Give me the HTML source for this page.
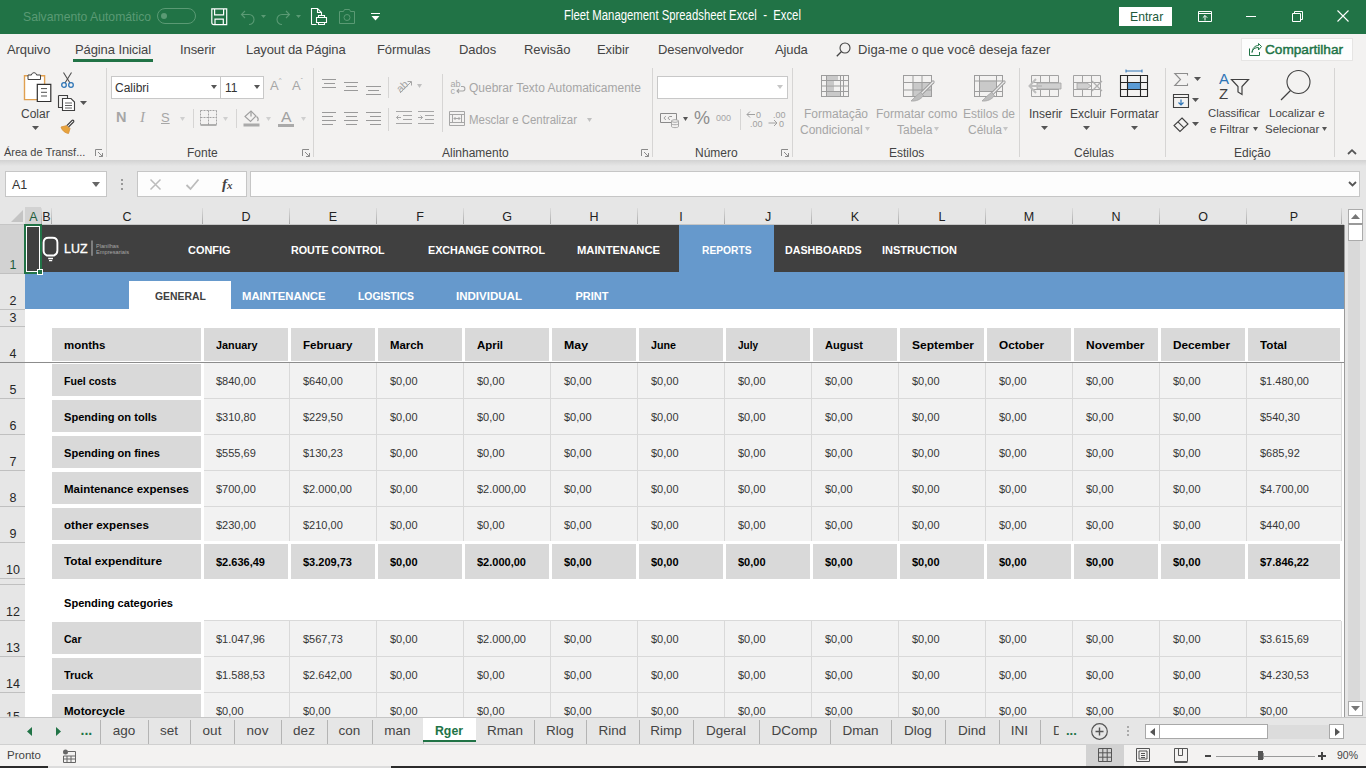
<!DOCTYPE html><html><head><meta charset="utf-8"><title>Excel</title><style>
html,body{margin:0;padding:0;} body{width:1366px;height:768px;overflow:hidden;position:relative;background:#f3f2f1;font-family:"Liberation Sans", sans-serif;} div{box-sizing:border-box;} svg{position:absolute;overflow:visible;}
</style></head><body>
<div style="position:absolute;left:0px;top:0px;width:1366px;height:34px;background:#217346;"></div>
<div style="position:absolute;left:23px;top:11px;font-size:12.2px;line-height:12.2px;color:#5a9a74;font-weight:normal;letter-spacing:0px;white-space:nowrap;">Salvamento Automático</div>
<div style="position:absolute;left:157px;top:8px;width:39px;height:16px;border:1px solid #5a9a74;border-radius:8px;"></div>
<div style="position:absolute;left:161px;top:13px;width:6px;height:6px;background:#5a9a74;border-radius:3px;"></div>
<svg style="left:211px;top:8px" width="17" height="18" viewBox="0 0 17 18"><path d="M0.8 0.8H15.7V16.7H3C1.6 16.7 0.8 15.9 0.8 14.5Z M3.6 0.8V6.8H12.6V0.8 M4 16.7V11.2H12.3V16.7" fill="none" stroke="#fff" stroke-width="1.2"/></svg>
<svg style="left:240px;top:9px" width="16" height="16" viewBox="0 0 16 16"><path d="M5 2L1.5 5.5L5 9 M1.5 5.5H9a5 5 0 0 1 0 10" fill="none" stroke="#5a9a74" stroke-width="1.1"/></svg>
<svg style="left:261px;top:15px" width="5" height="3"><path d="M0 0H5L2.5 3Z" fill="#5a9a74"/></svg>
<svg style="left:275px;top:9px" width="16" height="16" viewBox="0 0 16 16"><path d="M11 2L14.5 5.5L11 9 M14.5 5.5H7a5 5 0 0 0 0 10" fill="none" stroke="#5a9a74" stroke-width="1.1"/></svg>
<svg style="left:296px;top:15px" width="5" height="3"><path d="M0 0H5L2.5 3Z" fill="#5a9a74"/></svg>
<svg style="left:311px;top:8px" width="16" height="17" viewBox="0 0 16 17"><path d="M0.5 16.5V0.5H6.5L10.5 4.5V8 M6.5 0.5V4.5H10.5 M0.5 16.5H5.5 M5.5 9.5H15.5V14.5H5.5Z M7.5 9.5V7.5H13.5V9.5 M7.5 14.5V16.5H13.5V14.5" fill="none" stroke="#fff" stroke-width="1.1"/></svg>
<svg style="left:339px;top:9px" width="16" height="15" viewBox="0 0 16 15"><path d="M0.5 2.5H4.5L5.5 0.5H10.5L11.5 2.5H15.5V14.5H0.5Z" fill="none" stroke="#5a9a74" stroke-width="1"/><circle cx="8" cy="8.5" r="3" fill="none" stroke="#5a9a74" stroke-width="1"/></svg>
<svg style="left:371px;top:13px" width="9" height="8" viewBox="0 0 9 8"><path d="M0 0.5H9" stroke="#fff" stroke-width="1"/><path d="M0.5 3H8.5L4.5 7.5Z" fill="#fff"/></svg>
<div style="position:absolute;left:563.5px;top:9.32px;font-size:13.8px;line-height:13.8px;color:#fff;font-weight:normal;white-space:nowrap;transform:scaleX(0.8217);transform-origin:0 0;">Fleet Management Spreadsheet Excel&nbsp;&nbsp;-&nbsp;&nbsp;Excel</div>
<div style="position:absolute;left:1119px;top:7px;width:53px;height:19px;background:#fff;"></div>
<div style="position:absolute;left:1130px;top:11px;font-size:12.2px;line-height:12.2px;color:#215a3a;font-weight:normal;letter-spacing:0px;white-space:nowrap;">Entrar</div>
<svg style="left:1198px;top:11px" width="14" height="11" viewBox="0 0 14 11"><path d="M0.5 0.5H13.5V10.5H0.5Z M0.5 2.5H13.5 M7 9.5V4.5 M4.8 6.7L7 4.5L9.2 6.7" fill="none" stroke="#fff" stroke-width="1"/></svg>
<div style="position:absolute;left:1246px;top:16px;width:10px;height:1px;background:#fff;"></div>
<svg style="left:1292px;top:11px" width="11" height="11" viewBox="0 0 11 11"><path d="M0.5 2.5H8.5V10.5H0.5Z M2.5 2.5V0.5H10.5V8.5H8.5" fill="none" stroke="#fff" stroke-width="1"/></svg>
<svg style="left:1337px;top:10px" width="12" height="12" viewBox="0 0 12 12"><path d="M0.5 0.5L11.5 11.5M11.5 0.5L0.5 11.5" stroke="#fff" stroke-width="1.1"/></svg>
<div style="position:absolute;left:7px;top:43px;font-size:13px;line-height:13px;color:#444;font-weight:normal;letter-spacing:-0.1px;white-space:nowrap;">Arquivo</div>
<div style="position:absolute;left:75px;top:43px;font-size:13px;line-height:13px;color:#444;font-weight:normal;letter-spacing:-0.1px;white-space:nowrap;">Página Inicial</div>
<div style="position:absolute;left:180px;top:43px;font-size:13px;line-height:13px;color:#444;font-weight:normal;letter-spacing:-0.1px;white-space:nowrap;">Inserir</div>
<div style="position:absolute;left:246px;top:43px;font-size:13px;line-height:13px;color:#444;font-weight:normal;letter-spacing:-0.1px;white-space:nowrap;">Layout da Página</div>
<div style="position:absolute;left:377px;top:43px;font-size:13px;line-height:13px;color:#444;font-weight:normal;letter-spacing:-0.1px;white-space:nowrap;">Fórmulas</div>
<div style="position:absolute;left:459px;top:43px;font-size:13px;line-height:13px;color:#444;font-weight:normal;letter-spacing:-0.1px;white-space:nowrap;">Dados</div>
<div style="position:absolute;left:524px;top:43px;font-size:13px;line-height:13px;color:#444;font-weight:normal;letter-spacing:-0.1px;white-space:nowrap;">Revisão</div>
<div style="position:absolute;left:597px;top:43px;font-size:13px;line-height:13px;color:#444;font-weight:normal;letter-spacing:-0.1px;white-space:nowrap;">Exibir</div>
<div style="position:absolute;left:658px;top:43px;font-size:13px;line-height:13px;color:#444;font-weight:normal;letter-spacing:-0.1px;white-space:nowrap;">Desenvolvedor</div>
<div style="position:absolute;left:775px;top:43px;font-size:13px;line-height:13px;color:#444;font-weight:normal;letter-spacing:-0.1px;white-space:nowrap;">Ajuda</div>
<div style="position:absolute;left:73px;top:59px;width:80px;height:3px;background:#217346;"></div>
<svg style="left:836px;top:42px" width="15" height="15" viewBox="0 0 15 15"><circle cx="9" cy="6" r="5" fill="none" stroke="#444" stroke-width="1.1"/><path d="M5.5 9.5L0.8 14.2" stroke="#444" stroke-width="1.3"/></svg>
<div style="position:absolute;left:858px;top:43px;font-size:13px;line-height:13px;color:#444;font-weight:normal;letter-spacing:0.05px;white-space:nowrap;">Diga-me o que você deseja fazer</div>
<div style="position:absolute;left:1241px;top:38px;width:112px;height:23px;background:#fdfdfd;border:1px solid #e6e5e4;"></div>
<svg style="left:1249px;top:43px" width="13" height="13" viewBox="0 0 13 13"><path d="M0.5 5.5V12.5H10.5V9 M3 9.5C3.5 6 6 4.5 9.5 4.5V7L12.5 3.5L9.5 0.5V2.5C6 2.5 3.5 5 3 9.5Z" fill="none" stroke="#217346" stroke-width="1"/></svg>
<div style="position:absolute;left:1265px;top:42.57px;font-size:13.5px;line-height:13.5px;color:#217346;font-weight:normal;white-space:nowrap;transform:scaleX(1.0093);transform-origin:0 0;-webkit-text-stroke:0.45px #217346;">Compartilhar</div>
<div style="position:absolute;left:106px;top:68px;width:1px;height:89px;background:#d6d5d4;"></div>
<div style="position:absolute;left:313px;top:68px;width:1px;height:89px;background:#d6d5d4;"></div>
<div style="position:absolute;left:652px;top:68px;width:1px;height:89px;background:#d6d5d4;"></div>
<div style="position:absolute;left:792px;top:68px;width:1px;height:89px;background:#d6d5d4;"></div>
<div style="position:absolute;left:1019px;top:68px;width:1px;height:89px;background:#d6d5d4;"></div>
<div style="position:absolute;left:1165px;top:68px;width:1px;height:89px;background:#d6d5d4;"></div>
<div style="position:absolute;left:1334px;top:68px;width:1px;height:89px;background:#d6d5d4;"></div>
<svg style="left:23px;top:71px" width="30" height="32" viewBox="0 0 30 32"><path d="M1.5 4.8H21.6V28.6H1.5Z" fill="#fff" stroke="#e0a050" stroke-width="1.4"/><path d="M5 8.5V4H8.5C8.5 1 13.5 1 13.5 4H17.5V8.5Z" fill="#fff" stroke="#404040" stroke-width="1"/><path d="M14.3 13.3H27.8V30.5H14.3Z" fill="#fff" stroke="#303030" stroke-width="1.2"/><path d="M18 17.6H24 M18 21.3H24 M18 25H24" stroke="#505050" stroke-width="1"/></svg>
<div style="position:absolute;left:21px;top:108px;font-size:12px;line-height:12px;color:#444;font-weight:normal;letter-spacing:0px;white-space:nowrap;">Colar</div>
<svg style="left:31.5px;top:126px" width="7" height="4"><path d="M0 0H7L3.5 4Z" fill="#555"/></svg>
<svg style="left:61px;top:72px" width="13" height="16" viewBox="0 0 13 16"><path d="M2.5 0.5L9 11 M10.5 0.5L4 11" stroke="#505050" stroke-width="1.1"/><circle cx="3" cy="13" r="2.3" fill="none" stroke="#2e75b6" stroke-width="1.3"/><circle cx="10" cy="13" r="2.3" fill="none" stroke="#2e75b6" stroke-width="1.3"/></svg>
<svg style="left:58px;top:95px" width="17" height="16" viewBox="0 0 17 16"><path d="M0.5 0.5H9.5V3 M0.5 0.5V12.5H4" fill="none" stroke="#404040" stroke-width="1.1"/><path d="M4.5 3.5H13L16.5 7V15.5H4.5Z" fill="#fff" stroke="#404040" stroke-width="1.1"/><path d="M7 8H14 M7 10.5H14 M7 13H14" stroke="#505050" stroke-width="0.9"/></svg>
<svg style="left:79.5px;top:101px" width="7" height="4"><path d="M0 0H7L3.5 4Z" fill="#555"/></svg>
<svg style="left:60px;top:118px" width="16" height="16" viewBox="0 0 16 16"><path d="M1 9L7 7.5L10 10.5L8.5 15.5C5 15 2 12.5 1 9Z" fill="#e8a33c" stroke="#d6913a" stroke-width="0.8"/><path d="M7 7.5L12 2.5C13 1.5 14.5 3 13.5 4L8.5 9" fill="#fff" stroke="#404040" stroke-width="1.1"/></svg>
<div style="position:absolute;left:4px;top:147px;font-size:11px;line-height:11px;color:#444;font-weight:normal;letter-spacing:0px;white-space:nowrap;">Área de Transf...</div>
<svg style="left:95px;top:149px" width="8" height="8" viewBox="0 0 8 8"><path d="M0.5 7V0.5H7 M3 3L7.5 7.5 M7.5 4V7.5H4" fill="none" stroke="#8a8a8a" stroke-width="1"/></svg>
<div style="position:absolute;left:111px;top:76px;width:110px;height:23px;background:#fff;border:1px solid #c8c8c8;"></div>
<div style="position:absolute;left:115px;top:82px;font-size:12px;line-height:12px;color:#333;font-weight:normal;letter-spacing:0px;white-space:nowrap;">Calibri</div>
<svg style="left:211.0px;top:85px" width="6" height="4"><path d="M0 0H6L3.0 4Z" fill="#555"/></svg>
<div style="position:absolute;left:220px;top:76px;width:44px;height:23px;background:#fff;border:1px solid #c8c8c8;"></div>
<div style="position:absolute;left:225px;top:82px;font-size:12px;line-height:12px;color:#333;font-weight:normal;letter-spacing:0px;white-space:nowrap;">11</div>
<svg style="left:254.0px;top:85px" width="6" height="4"><path d="M0 0H6L3.0 4Z" fill="#555"/></svg>
<div style="position:absolute;left:270px;top:74px;font-size:13px;line-height:13px;color:#a6a6a6;font-weight:normal;letter-spacing:0px;white-space:nowrap;">A<sup style="font-size:6px;vertical-align:8px">^</sup></div>
<div style="position:absolute;left:292px;top:74px;font-size:13px;line-height:13px;color:#a6a6a6;font-weight:normal;letter-spacing:0px;white-space:nowrap;">A<sup style="font-size:6px;vertical-align:8px">ˇ</sup></div>
<div style="position:absolute;left:116px;top:110px;font-size:14.5px;line-height:14.5px;color:#a6a6a6;font-weight:bold;letter-spacing:0px;white-space:nowrap;">N</div>
<div style="position:absolute;left:140px;top:110px;font-size:15px;line-height:15px;color:#a6a6a6;font-weight:normal;letter-spacing:0px;white-space:nowrap;font-family:'Liberation Serif',serif;"><i>I</i></div>
<div style="position:absolute;left:161px;top:111px;font-size:13px;line-height:13px;color:#a6a6a6;font-weight:normal;letter-spacing:0px;white-space:nowrap;"><u>S</u></div>
<svg style="left:179.5px;top:117px" width="5" height="4"><path d="M0 0H5L2.5 4Z" fill="#cfcfcf"/></svg>
<div style="position:absolute;left:193px;top:109px;width:1px;height:19px;background:#d6d5d4;"></div>
<svg style="left:200px;top:110px" width="17" height="16" viewBox="0 0 17 16"><path d="M0.5 0.5H16.5 M0.5 0.5V15 M16.5 0.5V15 M8.5 0.5V15 M0.5 7.5H16.5" fill="none" stroke="#a3a3a3" stroke-width="1" stroke-dasharray="2 1"/><path d="M0.5 15H16.5" stroke="#8a8a8a" stroke-width="1.3"/></svg>
<svg style="left:222.5px;top:117px" width="5" height="4"><path d="M0 0H5L2.5 4Z" fill="#cfcfcf"/></svg>
<div style="position:absolute;left:236px;top:109px;width:1px;height:19px;background:#d6d5d4;"></div>
<svg style="left:243px;top:109px" width="18" height="18" viewBox="0 0 18 18"><path d="M2 7.5L8 2L13 7L7.5 12.5Z" fill="none" stroke="#a0a0a0" stroke-width="1.1"/><path d="M8 2V7.5" stroke="#a0a0a0" stroke-width="1.3"/><path d="M13.5 7.5C15.5 9 15.5 11 14.5 12" fill="none" stroke="#a0a0a0" stroke-width="1.3"/><rect x="0.5" y="14.5" width="16" height="3" fill="#aaaaaa"/></svg>
<svg style="left:265.5px;top:117px" width="5" height="4"><path d="M0 0H5L2.5 4Z" fill="#cfcfcf"/></svg>
<div style="position:absolute;left:280.5px;top:109.00px;font-size:15px;line-height:15px;color:#a0a0a0;font-weight:normal;white-space:nowrap;transform:scaleX(1.0494);transform-origin:0 0;">A</div>
<div style="position:absolute;left:278px;top:123.5px;width:16px;height:3px;background:#aaaaaa;"></div>
<svg style="left:300.5px;top:117px" width="5" height="4"><path d="M0 0H5L2.5 4Z" fill="#cfcfcf"/></svg>
<div style="position:absolute;left:187px;top:147px;font-size:12px;line-height:12px;color:#444;font-weight:normal;letter-spacing:0px;white-space:nowrap;">Fonte</div>
<svg style="left:302px;top:149px" width="8" height="8" viewBox="0 0 8 8"><path d="M0.5 7V0.5H7 M3 3L7.5 7.5 M7.5 4V7.5H4" fill="none" stroke="#8a8a8a" stroke-width="1"/></svg>
<div style="position:absolute;left:321.5px;top:79px;width:14.5px;height:1px;background:#9a9a9a;"></div>
<div style="position:absolute;left:324px;top:83px;width:10.5px;height:1px;background:#9a9a9a;"></div>
<div style="position:absolute;left:321.5px;top:87px;width:14.5px;height:1px;background:#9a9a9a;"></div>
<div style="position:absolute;left:344px;top:82px;width:14px;height:1px;background:#9a9a9a;"></div>
<div style="position:absolute;left:345.5px;top:86px;width:11.0px;height:1px;background:#9a9a9a;"></div>
<div style="position:absolute;left:344px;top:90px;width:14px;height:1px;background:#9a9a9a;"></div>
<div style="position:absolute;left:366px;top:86px;width:15px;height:1px;background:#9a9a9a;"></div>
<div style="position:absolute;left:368px;top:90px;width:10.5px;height:1px;background:#9a9a9a;"></div>
<div style="position:absolute;left:366px;top:94px;width:15px;height:1px;background:#9a9a9a;"></div>
<div style="position:absolute;left:388px;top:77px;width:1px;height:21px;background:#d6d5d4;"></div>
<svg style="left:394px;top:77px" width="20" height="18" viewBox="0 0 20 18"><text x="2" y="13" font-size="10.5" fill="#a6a6a6" transform="rotate(-45 8 9)" font-family="Liberation Sans">ab</text><path d="M6 16L17 5 M13.5 4.5H17.5V8.5" fill="none" stroke="#a6a6a6" stroke-width="1"/></svg>
<svg style="left:416.5px;top:84px" width="5" height="4"><path d="M0 0H5L2.5 4Z" fill="#c0c0c0"/></svg>
<div style="position:absolute;left:321.5px;top:112px;width:14.5px;height:1px;background:#9a9a9a;"></div>
<div style="position:absolute;left:321.5px;top:116px;width:11.0px;height:1px;background:#9a9a9a;"></div>
<div style="position:absolute;left:321.5px;top:120px;width:14.5px;height:1px;background:#9a9a9a;"></div>
<div style="position:absolute;left:321.5px;top:124px;width:11.0px;height:1px;background:#9a9a9a;"></div>
<div style="position:absolute;left:344px;top:112px;width:14px;height:1px;background:#9a9a9a;"></div>
<div style="position:absolute;left:345.5px;top:116px;width:11.0px;height:1px;background:#9a9a9a;"></div>
<div style="position:absolute;left:344px;top:120px;width:14px;height:1px;background:#9a9a9a;"></div>
<div style="position:absolute;left:345.5px;top:124px;width:11.0px;height:1px;background:#9a9a9a;"></div>
<div style="position:absolute;left:366px;top:112px;width:15px;height:1px;background:#9a9a9a;"></div>
<div style="position:absolute;left:370px;top:116px;width:11px;height:1px;background:#9a9a9a;"></div>
<div style="position:absolute;left:366px;top:120px;width:15px;height:1px;background:#9a9a9a;"></div>
<div style="position:absolute;left:370px;top:124px;width:11px;height:1px;background:#9a9a9a;"></div>
<div style="position:absolute;left:388px;top:108px;width:1px;height:23px;background:#d6d5d4;"></div>
<svg style="left:396px;top:111px" width="16" height="14" viewBox="0 0 16 14"><path d="M0 0.5H16 M7 4.5H16 M7 8.5H16 M0 12.5H16 M5 6.5H0.5 M2.5 4.5L0.5 6.5L2.5 8.5" fill="none" stroke="#a6a6a6" stroke-width="1"/></svg>
<svg style="left:418px;top:111px" width="16" height="14" viewBox="0 0 16 14"><path d="M0 0.5H16 M7 4.5H16 M7 8.5H16 M0 12.5H16 M0 6.5H4.5 M2.5 4.5L4.5 6.5L2.5 8.5" fill="none" stroke="#a6a6a6" stroke-width="1"/></svg>
<div style="position:absolute;left:442px;top:74px;width:1px;height:58px;background:#d6d5d4;"></div>
<svg style="left:450px;top:79px" width="16" height="16" viewBox="0 0 16 16"><text x="0.5" y="7.5" font-size="9" fill="#a6a6a6" font-family="Liberation Sans">ab</text><text x="0.5" y="14.5" font-size="9" fill="#a6a6a6" font-family="Liberation Sans">c</text><path d="M7 12H13C15.5 12 15.5 7.5 13 7.5H11 M9 10L7 12L9 14" fill="none" stroke="#a6a6a6" stroke-width="1.1"/></svg>
<div style="position:absolute;left:469px;top:82px;font-size:12px;line-height:12px;color:#a6a6a6;font-weight:normal;letter-spacing:0px;white-space:nowrap;">Quebrar Texto Automaticamente</div>
<svg style="left:449px;top:111px" width="16" height="16" viewBox="0 0 16 16"><path d="M0.5 0.5H15.5V14.5H0.5Z M0.5 3.5H15.5 M0.5 11.5H15.5 M3.5 3.5V11.5 M12.5 3.5V11.5 M5 7.5H11 M6.5 6L5 7.5L6.5 9 M9.5 6L11 7.5L9.5 9" fill="none" stroke="#a6a6a6" stroke-width="1"/></svg>
<div style="position:absolute;left:469px;top:113.84px;font-size:12px;line-height:12px;color:#a6a6a6;font-weight:normal;white-space:nowrap;transform:scaleX(0.9526);transform-origin:0 0;">Mesclar e Centralizar</div>
<svg style="left:586.5px;top:118px" width="5" height="4"><path d="M0 0H5L2.5 4Z" fill="#c0c0c0"/></svg>
<div style="position:absolute;left:442px;top:147px;font-size:12px;line-height:12px;color:#444;font-weight:normal;letter-spacing:0px;white-space:nowrap;">Alinhamento</div>
<svg style="left:641px;top:149px" width="8" height="8" viewBox="0 0 8 8"><path d="M0.5 7V0.5H7 M3 3L7.5 7.5 M7.5 4V7.5H4" fill="none" stroke="#8a8a8a" stroke-width="1"/></svg>
<div style="position:absolute;left:657px;top:76px;width:131px;height:23px;background:#fff;border:1px solid #c8c8c8;"></div>
<svg style="left:777.0px;top:85px" width="6" height="4"><path d="M0 0H6L3.0 4Z" fill="#c6c6c6"/></svg>
<svg style="left:660px;top:112px" width="19" height="16" viewBox="0 0 19 16"><path d="M0.5 1.5H16.5V10.5H0.5Z" fill="none" stroke="#8a8a8a" stroke-width="1"/><path d="M6 4.5C4 4.5 3.5 7.5 6 7.5 M10 4.5C8 4.5 7.5 7.5 10 7.5 M10 4.5H12" fill="none" stroke="#8a8a8a" stroke-width="0.9"/><path d="M11.5 9V14.5C11.5 16 18.5 16 18.5 14.5V9Z" fill="#f3f2f1" stroke="#a0a0a0" stroke-width="0.9"/><ellipse cx="15" cy="9" rx="3.5" ry="1.3" fill="#f3f2f1" stroke="#a0a0a0" stroke-width="0.9"/><path d="M11.5 11.8C11.5 13 18.5 13 18.5 11.8" fill="none" stroke="#a0a0a0" stroke-width="0.9"/></svg>
<svg style="left:682.5px;top:117px" width="5" height="4"><path d="M0 0H5L2.5 4Z" fill="#555"/></svg>
<div style="position:absolute;left:694px;top:109px;font-size:18px;line-height:18px;color:#8c8c8c;font-weight:normal;letter-spacing:0px;white-space:nowrap;font-weight:300;">%</div>
<div style="position:absolute;left:716px;top:114px;font-size:9px;line-height:9px;color:#a6a6a6;font-weight:normal;letter-spacing:0px;white-space:nowrap;">000</div>
<div style="position:absolute;left:740px;top:109px;width:1px;height:21px;background:#d6d5d4;"></div>
<svg style="left:746px;top:110px" width="18" height="18" viewBox="0 0 18 18"><text x="10" y="8" font-size="9" fill="#a0a0a0" font-family="Liberation Sans">0</text><text x="4" y="16.5" font-size="9" fill="#a0a0a0" font-family="Liberation Sans">.00</text><path d="M1 4.5H9 M4 1.5L1 4.5L4 7.5" fill="none" stroke="#a0a0a0" stroke-width="1"/></svg>
<svg style="left:768px;top:110px" width="18" height="18" viewBox="0 0 18 18"><text x="5" y="8" font-size="9" fill="#a0a0a0" font-family="Liberation Sans">.00</text><text x="11" y="16.5" font-size="9" fill="#a0a0a0" font-family="Liberation Sans">0</text><path d="M0.5 13H9 M6 10L9 13L6 16" fill="none" stroke="#a0a0a0" stroke-width="1"/></svg>
<div style="position:absolute;left:695px;top:147px;font-size:12px;line-height:12px;color:#444;font-weight:normal;letter-spacing:0px;white-space:nowrap;">Número</div>
<svg style="left:781px;top:149px" width="8" height="8" viewBox="0 0 8 8"><path d="M0.5 7V0.5H7 M3 3L7.5 7.5 M7.5 4V7.5H4" fill="none" stroke="#8a8a8a" stroke-width="1"/></svg>
<svg style="left:821px;top:75px" width="36" height="30"><rect x="5" y="0" width="12" height="5" fill="#c9c9c9"/><rect x="5" y="5" width="8" height="5.5" fill="#c9c9c9"/><rect x="5" y="10.5" width="8" height="5.5" fill="#c9c9c9"/><rect x="5" y="16" width="14" height="5" fill="#c9c9c9"/><rect x="0" y="0" width="1" height="22" fill="#9d9d9d"/><rect x="5" y="0" width="1" height="22" fill="#9d9d9d"/><rect x="19" y="0" width="1" height="22" fill="#9d9d9d"/><rect x="22" y="0" width="1" height="22" fill="#9d9d9d"/><rect x="27" y="0" width="1" height="22" fill="#9d9d9d"/><rect x="0" y="0" width="28" height="1" fill="#9d9d9d"/><rect x="0" y="5" width="28" height="1" fill="#9d9d9d"/><rect x="0" y="10.5" width="28" height="1" fill="#9d9d9d"/><rect x="0" y="16" width="28" height="1" fill="#9d9d9d"/><rect x="0" y="21" width="28" height="1" fill="#9d9d9d"/></svg>
<div style="position:absolute;left:804px;top:108px;font-size:12px;line-height:12px;color:#a6a6a6;font-weight:normal;letter-spacing:0px;white-space:nowrap;">Formatação</div>
<div style="position:absolute;left:800px;top:124px;font-size:12px;line-height:12px;color:#a6a6a6;font-weight:normal;letter-spacing:0px;white-space:nowrap;">Condicional</div>
<svg style="left:864.5px;top:127px" width="5" height="4"><path d="M0 0H5L2.5 4Z" fill="#c6c6c6"/></svg>
<svg style="left:903px;top:75px" width="36" height="30"><rect x="9.5" y="7" width="19" height="14" fill="#c9c9c9"/><rect x="0" y="0" width="1" height="22" fill="#9d9d9d"/><rect x="9.5" y="0" width="1" height="22" fill="#9d9d9d"/><rect x="18.5" y="0" width="1" height="22" fill="#9d9d9d"/><rect x="28" y="0" width="1" height="22" fill="#9d9d9d"/><rect x="0" y="0" width="28" height="1" fill="#9d9d9d"/><rect x="0" y="7" width="28" height="1" fill="#9d9d9d"/><rect x="0" y="14.5" width="28" height="1" fill="#9d9d9d"/><rect x="0" y="21" width="28" height="1" fill="#9d9d9d"/><path d="M30 7L18 19" stroke="#9d9d9d" stroke-width="3.2" stroke-linecap="round"/><path d="M30 7L18 19" stroke="#ececec" stroke-width="1.3" stroke-linecap="round"/><path d="M17.5 17.5C14 20 12 22 8 26C13 26.5 18 24.5 20.5 20.5Z" fill="#bdbdbd" stroke="#a5a5a5" stroke-width="0.8"/></svg>
<div style="position:absolute;left:876px;top:108px;font-size:12px;line-height:12px;color:#a6a6a6;font-weight:normal;letter-spacing:0px;white-space:nowrap;">Formatar como</div>
<div style="position:absolute;left:897px;top:124px;font-size:12px;line-height:12px;color:#a6a6a6;font-weight:normal;letter-spacing:0px;white-space:nowrap;">Tabela</div>
<svg style="left:933.5px;top:127px" width="5" height="4"><path d="M0 0H5L2.5 4Z" fill="#c6c6c6"/></svg>
<svg style="left:974px;top:75px" width="36" height="30"><rect x="5" y="5.5" width="17" height="10.5" fill="#c9c9c9"/><rect x="0" y="0" width="1" height="22" fill="#9d9d9d"/><rect x="5" y="0" width="1" height="22" fill="#9d9d9d"/><rect x="22" y="0" width="1" height="22" fill="#9d9d9d"/><rect x="28" y="0" width="1" height="22" fill="#9d9d9d"/><rect x="0" y="0" width="28" height="1" fill="#9d9d9d"/><rect x="0" y="5.5" width="28" height="1" fill="#9d9d9d"/><rect x="0" y="16" width="28" height="1" fill="#9d9d9d"/><rect x="0" y="21" width="28" height="1" fill="#9d9d9d"/><path d="M30 7L18 19" stroke="#9d9d9d" stroke-width="3.2" stroke-linecap="round"/><path d="M30 7L18 19" stroke="#ececec" stroke-width="1.3" stroke-linecap="round"/><path d="M17.5 17.5C14 20 12 22 8 26C13 26.5 18 24.5 20.5 20.5Z" fill="#bdbdbd" stroke="#a5a5a5" stroke-width="0.8"/></svg>
<div style="position:absolute;left:963px;top:108px;font-size:12px;line-height:12px;color:#a6a6a6;font-weight:normal;letter-spacing:0px;white-space:nowrap;">Estilos de</div>
<div style="position:absolute;left:968px;top:124px;font-size:12px;line-height:12px;color:#a6a6a6;font-weight:normal;letter-spacing:0px;white-space:nowrap;">Célula</div>
<svg style="left:1002.5px;top:127px" width="5" height="4"><path d="M0 0H5L2.5 4Z" fill="#c6c6c6"/></svg>
<div style="position:absolute;left:889px;top:147px;font-size:12px;line-height:12px;color:#444;font-weight:normal;letter-spacing:0px;white-space:nowrap;">Estilos</div>
<svg style="left:1028px;top:74px" width="34" height="24" viewBox="0 0 34 24"><path d="M3.5 1.5H30.5V22.5H3.5Z M12.5 1.5V22.5 M21.5 1.5V22.5 M3.5 8.5H30.5 M3.5 15.5H30.5" fill="none" stroke="#a3a3a3" stroke-width="1"/><path d="M9 9H33V15H9Z" fill="#cfcfcf" stroke="#a3a3a3" stroke-width="0.8"/><path d="M8 5L1.5 12L8 19 M1.5 12H14" fill="none" stroke="#bdbdbd" stroke-width="2"/></svg>
<div style="position:absolute;left:1029px;top:108px;font-size:12px;line-height:12px;color:#444;font-weight:normal;letter-spacing:0px;white-space:nowrap;">Inserir</div>
<svg style="left:1040.5px;top:126px" width="7" height="4"><path d="M0 0H7L3.5 4Z" fill="#555"/></svg>
<svg style="left:1072px;top:74px" width="32" height="24" viewBox="0 0 32 24"><path d="M1.5 1.5H28.5V22.5H1.5Z M10.5 1.5V22.5 M19.5 1.5V22.5 M1.5 8.5H28.5 M1.5 15.5H28.5" fill="none" stroke="#a3a3a3" stroke-width="1"/><path d="M5 9H15L19 12L15 15H5Z" fill="#cfcfcf" stroke="#a3a3a3" stroke-width="0.8"/><path d="M20 7L30 17 M30 7L20 17" stroke="#b0b0b0" stroke-width="1.3"/></svg>
<div style="position:absolute;left:1070px;top:108px;font-size:12px;line-height:12px;color:#444;font-weight:normal;letter-spacing:0px;white-space:nowrap;">Excluir</div>
<svg style="left:1082.5px;top:126px" width="7" height="4"><path d="M0 0H7L3.5 4Z" fill="#555"/></svg>
<svg style="left:1119px;top:69px" width="30" height="29" viewBox="0 0 30 29"><path d="M7 2H23 M7 0.5V3.5 M23 0.5V3.5" stroke="#2e75b6" stroke-width="1"/><rect x="8.5" y="13.5" width="13" height="7" fill="#5b9bd5"/><path d="M1.5 6.5H28.5V27.5H1.5Z M1.5 13.5H28.5 M1.5 20.5H28.5 M8.5 6.5V27.5 M21.5 6.5V27.5" fill="none" stroke="#262626" stroke-width="1.1"/></svg>
<div style="position:absolute;left:1110px;top:108px;font-size:12px;line-height:12px;color:#444;font-weight:normal;letter-spacing:0px;white-space:nowrap;">Formatar</div>
<svg style="left:1130.5px;top:126px" width="7" height="4"><path d="M0 0H7L3.5 4Z" fill="#555"/></svg>
<div style="position:absolute;left:1074px;top:147px;font-size:12px;line-height:12px;color:#444;font-weight:normal;letter-spacing:0px;white-space:nowrap;">Células</div>
<svg style="left:1174px;top:73px" width="14" height="13" viewBox="0 0 14 13"><path d="M13.5 2.5V0.5H0.8L6.5 6.5L0.8 12.5H13.5V10.5" fill="none" stroke="#8c8c8c" stroke-width="1.1"/></svg>
<svg style="left:1193.5px;top:77px" width="7" height="4"><path d="M0 0H7L3.5 4Z" fill="#555"/></svg>
<svg style="left:1173px;top:94px" width="16" height="14" viewBox="0 0 16 14"><path d="M0.5 0.5H15.5V13.5H0.5Z M0.5 3.5H15.5" fill="none" stroke="#404040" stroke-width="1.1"/><path d="M8 5.5V11 M5.5 8.5L8 11L10.5 8.5" fill="none" stroke="#2e75b6" stroke-width="1.2"/></svg>
<svg style="left:1191.5px;top:98px" width="7" height="4"><path d="M0 0H7L3.5 4Z" fill="#555"/></svg>
<svg style="left:1173px;top:117px" width="16" height="15" viewBox="0 0 16 15"><path d="M9 1L15 7L7 14.5L1 8.5Z M5 4.8L11 10.8" fill="none" stroke="#404040" stroke-width="1.1"/></svg>
<svg style="left:1191.5px;top:122px" width="7" height="4"><path d="M0 0H7L3.5 4Z" fill="#555"/></svg>
<div style="position:absolute;left:1219px;top:71px;font-size:15px;line-height:15px;color:#2e75b6;font-weight:normal;letter-spacing:0px;white-space:nowrap;">A</div>
<div style="position:absolute;left:1219px;top:86px;font-size:15px;line-height:15px;color:#404040;font-weight:normal;letter-spacing:0px;white-space:nowrap;">Z</div>
<svg style="left:1231px;top:79px" width="18" height="16" viewBox="0 0 18 16"><path d="M0.5 0.5H17.5L11 7.5V15.5L7 13V7.5Z" fill="none" stroke="#404040" stroke-width="1.2"/></svg>
<div style="position:absolute;left:1208px;top:108px;font-size:11.3px;line-height:11.3px;color:#444;font-weight:normal;letter-spacing:0px;white-space:nowrap;">Classificar</div>
<div style="position:absolute;left:1210px;top:124px;font-size:11.5px;line-height:11.5px;color:#444;font-weight:normal;letter-spacing:0px;white-space:nowrap;">e Filtrar</div>
<svg style="left:1252.5px;top:127px" width="5" height="4"><path d="M0 0H5L2.5 4Z" fill="#555"/></svg>
<svg style="left:1280px;top:70px" width="32" height="32" viewBox="0 0 32 32"><circle cx="18.5" cy="12" r="11.5" fill="none" stroke="#404040" stroke-width="1.1"/><path d="M10.5 20.5L1 30" stroke="#404040" stroke-width="1.3"/></svg>
<div style="position:absolute;left:1269px;top:108px;font-size:11.5px;line-height:11.5px;color:#444;font-weight:normal;letter-spacing:0px;white-space:nowrap;">Localizar e</div>
<div style="position:absolute;left:1265px;top:124px;font-size:11.5px;line-height:11.5px;color:#444;font-weight:normal;letter-spacing:0px;white-space:nowrap;">Selecionar</div>
<svg style="left:1321.5px;top:127px" width="5" height="4"><path d="M0 0H5L2.5 4Z" fill="#555"/></svg>
<div style="position:absolute;left:1234px;top:147px;font-size:12px;line-height:12px;color:#444;font-weight:normal;letter-spacing:0px;white-space:nowrap;">Edição</div>
<svg style="left:1347px;top:149px" width="10" height="6" viewBox="0 0 10 6"><path d="M1 5L5 1.2L9 5" fill="none" stroke="#555" stroke-width="1.8"/></svg>
<div style="position:absolute;left:0px;top:160px;width:1366px;height:6px;background:linear-gradient(#d2d2d2,#e6e6e6);"></div>
<div style="position:absolute;left:0px;top:166px;width:1366px;height:41px;background:#e6e6e6;"></div>
<div style="position:absolute;left:5px;top:171px;width:102px;height:26px;background:#fff;border:1px solid #c6c6c6;"></div>
<div style="position:absolute;left:12px;top:179px;font-size:12.5px;line-height:12.5px;color:#333;font-weight:normal;letter-spacing:0px;white-space:nowrap;">A1</div>
<svg style="left:92px;top:182px" width="8" height="5"><path d="M0 0H8L4 5Z" fill="#666"/></svg>
<div style="position:absolute;left:121px;top:179px;width:2px;height:2px;background:#999;"></div>
<div style="position:absolute;left:121px;top:183px;width:2px;height:2px;background:#999;"></div>
<div style="position:absolute;left:121px;top:187.5px;width:2px;height:2px;background:#999;"></div>
<div style="position:absolute;left:137px;top:171px;width:110px;height:26px;background:#fdfdfd;border:1px solid #c6c6c6;"></div>
<svg style="left:150px;top:179px" width="11" height="11" viewBox="0 0 11 11"><path d="M0.5 0.5L10.5 10.5M10.5 0.5L0.5 10.5" stroke="#bcbcbc" stroke-width="1.5"/></svg>
<svg style="left:186px;top:179px" width="13" height="11" viewBox="0 0 13 11"><path d="M0.5 6L4.5 10L12.5 0.5" fill="none" stroke="#bcbcbc" stroke-width="1.8"/></svg>
<div style="position:absolute;left:222px;top:177px;font-size:15px;line-height:15px;color:#444;font-weight:bold;letter-spacing:0px;white-space:nowrap;font-family:'Liberation Serif',serif;"><i>f<span style="font-size:11px">x</span></i></div>
<div style="position:absolute;left:250px;top:171px;width:1110px;height:26px;background:#fdfdfd;border:1px solid #c6c6c6;"></div>
<svg style="left:1348px;top:181px" width="9" height="6" viewBox="0 0 9 6"><path d="M1 1L4.5 4.5L8 1" fill="none" stroke="#555" stroke-width="1.8"/></svg>
<div style="position:absolute;left:0px;top:207px;width:1345px;height:18px;background:#e6e6e6;"></div>
<div style="position:absolute;left:0px;top:224px;width:1345px;height:1px;background:#c6c6c6;"></div>
<svg style="left:11px;top:210px" width="12" height="12"><path d="M12 0V12H0Z" fill="#c4c4c4"/></svg>
<div style="position:absolute;left:25px;top:207px;width:16px;height:17px;background:#d2d2d2;"></div>
<div style="position:absolute;left:-266.5px;width:600px;text-align:center;top:211px;font-size:12.5px;line-height:12.5px;color:#1f5c3c;font-weight:normal;letter-spacing:0px;white-space:nowrap;">A</div>
<div style="position:absolute;left:41px;top:208px;width:1px;height:16px;background:linear-gradient(#dcdcdc,#a9a9a9);"></div>
<div style="position:absolute;left:-253.5px;width:600px;text-align:center;top:211px;font-size:12.5px;line-height:12.5px;color:#222;font-weight:normal;letter-spacing:0px;white-space:nowrap;">B</div>
<div style="position:absolute;left:51px;top:208px;width:1px;height:16px;background:linear-gradient(#dcdcdc,#a9a9a9);"></div>
<div style="position:absolute;left:-173.0px;width:600px;text-align:center;top:211px;font-size:12.5px;line-height:12.5px;color:#222;font-weight:normal;letter-spacing:0px;white-space:nowrap;">C</div>
<div style="position:absolute;left:202px;top:208px;width:1px;height:16px;background:linear-gradient(#dcdcdc,#a9a9a9);"></div>
<div style="position:absolute;left:-54.0px;width:600px;text-align:center;top:211px;font-size:12.5px;line-height:12.5px;color:#222;font-weight:normal;letter-spacing:0px;white-space:nowrap;">D</div>
<div style="position:absolute;left:289px;top:208px;width:1px;height:16px;background:linear-gradient(#dcdcdc,#a9a9a9);"></div>
<div style="position:absolute;left:33.0px;width:600px;text-align:center;top:211px;font-size:12.5px;line-height:12.5px;color:#222;font-weight:normal;letter-spacing:0px;white-space:nowrap;">E</div>
<div style="position:absolute;left:376px;top:208px;width:1px;height:16px;background:linear-gradient(#dcdcdc,#a9a9a9);"></div>
<div style="position:absolute;left:120.0px;width:600px;text-align:center;top:211px;font-size:12.5px;line-height:12.5px;color:#222;font-weight:normal;letter-spacing:0px;white-space:nowrap;">F</div>
<div style="position:absolute;left:463px;top:208px;width:1px;height:16px;background:linear-gradient(#dcdcdc,#a9a9a9);"></div>
<div style="position:absolute;left:207.0px;width:600px;text-align:center;top:211px;font-size:12.5px;line-height:12.5px;color:#222;font-weight:normal;letter-spacing:0px;white-space:nowrap;">G</div>
<div style="position:absolute;left:550px;top:208px;width:1px;height:16px;background:linear-gradient(#dcdcdc,#a9a9a9);"></div>
<div style="position:absolute;left:294.0px;width:600px;text-align:center;top:211px;font-size:12.5px;line-height:12.5px;color:#222;font-weight:normal;letter-spacing:0px;white-space:nowrap;">H</div>
<div style="position:absolute;left:637px;top:208px;width:1px;height:16px;background:linear-gradient(#dcdcdc,#a9a9a9);"></div>
<div style="position:absolute;left:381.0px;width:600px;text-align:center;top:211px;font-size:12.5px;line-height:12.5px;color:#222;font-weight:normal;letter-spacing:0px;white-space:nowrap;">I</div>
<div style="position:absolute;left:724px;top:208px;width:1px;height:16px;background:linear-gradient(#dcdcdc,#a9a9a9);"></div>
<div style="position:absolute;left:468.0px;width:600px;text-align:center;top:211px;font-size:12.5px;line-height:12.5px;color:#222;font-weight:normal;letter-spacing:0px;white-space:nowrap;">J</div>
<div style="position:absolute;left:811px;top:208px;width:1px;height:16px;background:linear-gradient(#dcdcdc,#a9a9a9);"></div>
<div style="position:absolute;left:555.0px;width:600px;text-align:center;top:211px;font-size:12.5px;line-height:12.5px;color:#222;font-weight:normal;letter-spacing:0px;white-space:nowrap;">K</div>
<div style="position:absolute;left:898px;top:208px;width:1px;height:16px;background:linear-gradient(#dcdcdc,#a9a9a9);"></div>
<div style="position:absolute;left:642.0px;width:600px;text-align:center;top:211px;font-size:12.5px;line-height:12.5px;color:#222;font-weight:normal;letter-spacing:0px;white-space:nowrap;">L</div>
<div style="position:absolute;left:985px;top:208px;width:1px;height:16px;background:linear-gradient(#dcdcdc,#a9a9a9);"></div>
<div style="position:absolute;left:729.0px;width:600px;text-align:center;top:211px;font-size:12.5px;line-height:12.5px;color:#222;font-weight:normal;letter-spacing:0px;white-space:nowrap;">M</div>
<div style="position:absolute;left:1072px;top:208px;width:1px;height:16px;background:linear-gradient(#dcdcdc,#a9a9a9);"></div>
<div style="position:absolute;left:816.0px;width:600px;text-align:center;top:211px;font-size:12.5px;line-height:12.5px;color:#222;font-weight:normal;letter-spacing:0px;white-space:nowrap;">N</div>
<div style="position:absolute;left:1159px;top:208px;width:1px;height:16px;background:linear-gradient(#dcdcdc,#a9a9a9);"></div>
<div style="position:absolute;left:903.0px;width:600px;text-align:center;top:211px;font-size:12.5px;line-height:12.5px;color:#222;font-weight:normal;letter-spacing:0px;white-space:nowrap;">O</div>
<div style="position:absolute;left:1246px;top:208px;width:1px;height:16px;background:linear-gradient(#dcdcdc,#a9a9a9);"></div>
<div style="position:absolute;left:994.0px;width:600px;text-align:center;top:211px;font-size:12.5px;line-height:12.5px;color:#222;font-weight:normal;letter-spacing:0px;white-space:nowrap;">P</div>
<div style="position:absolute;left:1341px;top:208px;width:1px;height:16px;background:linear-gradient(#dcdcdc,#a9a9a9);"></div>
<div style="position:absolute;left:0px;top:225px;width:26px;height:492px;background:#e6e6e6;"></div>
<div style="position:absolute;left:25px;top:225px;width:1px;height:492px;background:#ababab;"></div>
<div style="position:absolute;left:0px;top:225px;width:25px;height:48px;background:#d2d2d2;"></div>
<div style="position:absolute;left:0px;top:273px;width:25px;height:1px;background:#c0c0c0;"></div>
<div style="position:absolute;left:0.5px;top:259px;font-size:12.5px;line-height:12.5px;color:#1f5c3c;font-weight:normal;letter-spacing:0px;white-space:nowrap;"><span style="display:inline-block;width:25px;text-align:center">1</span></div>
<div style="position:absolute;left:0px;top:309px;width:25px;height:1px;background:#c0c0c0;"></div>
<div style="position:absolute;left:0.5px;top:295px;font-size:12.5px;line-height:12.5px;color:#262626;font-weight:normal;letter-spacing:0px;white-space:nowrap;"><span style="display:inline-block;width:25px;text-align:center">2</span></div>
<div style="position:absolute;left:0px;top:326px;width:25px;height:1px;background:#c0c0c0;"></div>
<div style="position:absolute;left:0.5px;top:312px;font-size:12.5px;line-height:12.5px;color:#262626;font-weight:normal;letter-spacing:0px;white-space:nowrap;"><span style="display:inline-block;width:25px;text-align:center">3</span></div>
<div style="position:absolute;left:0px;top:362px;width:25px;height:1px;background:#c0c0c0;"></div>
<div style="position:absolute;left:0.5px;top:348px;font-size:12.5px;line-height:12.5px;color:#262626;font-weight:normal;letter-spacing:0px;white-space:nowrap;"><span style="display:inline-block;width:25px;text-align:center">4</span></div>
<div style="position:absolute;left:0px;top:398px;width:25px;height:1px;background:#c0c0c0;"></div>
<div style="position:absolute;left:0.5px;top:384px;font-size:12.5px;line-height:12.5px;color:#262626;font-weight:normal;letter-spacing:0px;white-space:nowrap;"><span style="display:inline-block;width:25px;text-align:center">5</span></div>
<div style="position:absolute;left:0px;top:434px;width:25px;height:1px;background:#c0c0c0;"></div>
<div style="position:absolute;left:0.5px;top:420px;font-size:12.5px;line-height:12.5px;color:#262626;font-weight:normal;letter-spacing:0px;white-space:nowrap;"><span style="display:inline-block;width:25px;text-align:center">6</span></div>
<div style="position:absolute;left:0px;top:470px;width:25px;height:1px;background:#c0c0c0;"></div>
<div style="position:absolute;left:0.5px;top:456px;font-size:12.5px;line-height:12.5px;color:#262626;font-weight:normal;letter-spacing:0px;white-space:nowrap;"><span style="display:inline-block;width:25px;text-align:center">7</span></div>
<div style="position:absolute;left:0px;top:506px;width:25px;height:1px;background:#c0c0c0;"></div>
<div style="position:absolute;left:0.5px;top:492px;font-size:12.5px;line-height:12.5px;color:#262626;font-weight:normal;letter-spacing:0px;white-space:nowrap;"><span style="display:inline-block;width:25px;text-align:center">8</span></div>
<div style="position:absolute;left:0px;top:542px;width:25px;height:1px;background:#c0c0c0;"></div>
<div style="position:absolute;left:0.5px;top:528px;font-size:12.5px;line-height:12.5px;color:#262626;font-weight:normal;letter-spacing:0px;white-space:nowrap;"><span style="display:inline-block;width:25px;text-align:center">9</span></div>
<div style="position:absolute;left:0px;top:578px;width:25px;height:1px;background:#c0c0c0;"></div>
<div style="position:absolute;left:0.5px;top:564px;font-size:12.5px;line-height:12.5px;color:#262626;font-weight:normal;letter-spacing:0px;white-space:nowrap;"><span style="display:inline-block;width:25px;text-align:center">10</span></div>
<div style="position:absolute;left:0px;top:584px;width:25px;height:1px;background:#c0c0c0;"></div>
<div style="position:absolute;left:0px;top:620px;width:25px;height:1px;background:#c0c0c0;"></div>
<div style="position:absolute;left:0.5px;top:606px;font-size:12.5px;line-height:12.5px;color:#262626;font-weight:normal;letter-spacing:0px;white-space:nowrap;"><span style="display:inline-block;width:25px;text-align:center">12</span></div>
<div style="position:absolute;left:0px;top:656px;width:25px;height:1px;background:#c0c0c0;"></div>
<div style="position:absolute;left:0.5px;top:642px;font-size:12.5px;line-height:12.5px;color:#262626;font-weight:normal;letter-spacing:0px;white-space:nowrap;"><span style="display:inline-block;width:25px;text-align:center">13</span></div>
<div style="position:absolute;left:0px;top:692px;width:25px;height:1px;background:#c0c0c0;"></div>
<div style="position:absolute;left:0.5px;top:678px;font-size:12.5px;line-height:12.5px;color:#262626;font-weight:normal;letter-spacing:0px;white-space:nowrap;"><span style="display:inline-block;width:25px;text-align:center">14</span></div>
<div style="position:absolute;left:0.5px;top:711px;font-size:12.5px;line-height:12.5px;color:#262626;font-weight:normal;letter-spacing:0px;white-space:nowrap;clip-path:inset(0 0 7px 0);"><span style="display:inline-block;width:25px;text-align:center">15</span></div>
<div style="position:absolute;left:25px;top:225px;width:1320px;height:492px;background:#fff;overflow:hidden;"></div>
<div style="position:absolute;left:25px;top:225px;width:1319px;height:47px;background:#404040;"></div>
<div style="position:absolute;left:679px;top:225px;width:95px;height:47px;background:#6699cc;"></div>
<div style="position:absolute;left:25px;top:272px;width:1319px;height:37px;background:#6699cc;"></div>
<div style="position:absolute;left:129px;top:281px;width:102px;height:28px;background:#fff;"></div>
<svg style="left:42px;top:236px" width="100" height="28" viewBox="0 0 100 28"><path d="M5 19.5C2.5 18.5 1.6 17 1.6 14.5V6.5C1.6 3.5 3.3 1.8 6.5 1.8H10.5C13.7 1.8 15.4 3.5 15.4 6.5V14.5C15.4 17 14.5 18.5 12 19.5Z" fill="none" stroke="#fff" stroke-width="1.9"/><path d="M6.2 22.5H11 M7 24.6H10.2" stroke="#fff" stroke-width="1.3"/><path d="M50 4.5V19.8" stroke="#9a9a9a" stroke-width="1.4"/></svg>
<div style="position:absolute;left:63.5px;top:241.82px;font-size:13.2px;line-height:13.2px;color:#fff;font-weight:normal;white-space:nowrap;transform:scaleX(0.9423);transform-origin:0 0;-webkit-text-stroke:0.35px #fff;">LUZ</div>
<div style="position:absolute;left:96.2px;top:242.72px;font-size:6px;line-height:6px;color:#a8a8a8;font-weight:normal;white-space:nowrap;transform:scaleX(0.9323);transform-origin:0 0;">Planilhas</div>
<div style="position:absolute;left:96.2px;top:248.62px;font-size:6px;line-height:6px;color:#a8a8a8;font-weight:normal;white-space:nowrap;transform:scaleX(0.9425);transform-origin:0 0;">Empresariais</div>
<div style="position:absolute;left:187.5px;top:245.06px;font-size:11.5px;line-height:11.5px;color:#fff;font-weight:bold;white-space:nowrap;transform:scaleX(0.9504);transform-origin:0 0;">CONFIG</div>
<div style="position:absolute;left:290.5px;top:245.06px;font-size:11.5px;line-height:11.5px;color:#fff;font-weight:bold;white-space:nowrap;transform:scaleX(0.9332);transform-origin:0 0;">ROUTE CONTROL</div>
<div style="position:absolute;left:428px;top:245.06px;font-size:11.5px;line-height:11.5px;color:#fff;font-weight:bold;white-space:nowrap;transform:scaleX(0.9343);transform-origin:0 0;">EXCHANGE CONTROL</div>
<div style="position:absolute;left:577px;top:245.06px;font-size:11.5px;line-height:11.5px;color:#fff;font-weight:bold;white-space:nowrap;transform:scaleX(0.9768);transform-origin:0 0;">MAINTENANCE</div>
<div style="position:absolute;left:701.5px;top:245.06px;font-size:11.5px;line-height:11.5px;color:#fff;font-weight:bold;white-space:nowrap;transform:scaleX(0.8904);transform-origin:0 0;">REPORTS</div>
<div style="position:absolute;left:784.5px;top:245.06px;font-size:11.5px;line-height:11.5px;color:#fff;font-weight:bold;white-space:nowrap;transform:scaleX(0.9281);transform-origin:0 0;">DASHBOARDS</div>
<div style="position:absolute;left:882px;top:245.06px;font-size:11.5px;line-height:11.5px;color:#fff;font-weight:bold;white-space:nowrap;transform:scaleX(0.9544);transform-origin:0 0;">INSTRUCTION</div>
<div style="position:absolute;left:155px;top:290.99px;font-size:11px;line-height:11px;color:#404040;font-weight:bold;white-space:nowrap;transform:scaleX(0.9445);transform-origin:0 0;">GENERAL</div>
<div style="position:absolute;left:241.5px;top:290.99px;font-size:11px;line-height:11px;color:#fff;font-weight:bold;white-space:nowrap;transform:scaleX(1.0273);transform-origin:0 0;">MAINTENANCE</div>
<div style="position:absolute;left:358px;top:290.99px;font-size:11px;line-height:11px;color:#fff;font-weight:bold;white-space:nowrap;transform:scaleX(0.9446);transform-origin:0 0;">LOGISTICS</div>
<div style="position:absolute;left:456px;top:290.99px;font-size:11px;line-height:11px;color:#fff;font-weight:bold;white-space:nowrap;transform:scaleX(1.0485);transform-origin:0 0;">INDIVIDUAL</div>
<div style="position:absolute;left:575.4px;top:290.99px;font-size:11px;line-height:11px;color:#fff;font-weight:bold;white-space:nowrap;transform:scaleX(1.0000);transform-origin:0 0;">PRINT</div>
<div style="position:absolute;left:52px;top:328px;width:149px;height:33px;background:#d9d9d9;"></div>
<div style="position:absolute;left:64.4px;top:339.79px;font-size:11px;line-height:11px;color:#000;font-weight:bold;white-space:nowrap;transform:scaleX(1.0423);transform-origin:0 0;">months</div>
<div style="position:absolute;left:204px;top:328px;width:84px;height:33px;background:#d9d9d9;"></div>
<div style="position:absolute;left:216px;top:339.59px;font-size:11px;line-height:11px;color:#000;font-weight:bold;white-space:nowrap;transform:scaleX(0.9836);transform-origin:0 0;">January</div>
<div style="position:absolute;left:291px;top:328px;width:84px;height:33px;background:#d9d9d9;"></div>
<div style="position:absolute;left:303px;top:339.59px;font-size:11px;line-height:11px;color:#000;font-weight:bold;white-space:nowrap;transform:scaleX(1.0516);transform-origin:0 0;">February</div>
<div style="position:absolute;left:378px;top:328px;width:84px;height:33px;background:#d9d9d9;"></div>
<div style="position:absolute;left:390px;top:339.59px;font-size:11px;line-height:11px;color:#000;font-weight:bold;white-space:nowrap;transform:scaleX(1.0340);transform-origin:0 0;">March</div>
<div style="position:absolute;left:465px;top:328px;width:84px;height:33px;background:#d9d9d9;"></div>
<div style="position:absolute;left:477px;top:339.59px;font-size:11px;line-height:11px;color:#000;font-weight:bold;white-space:nowrap;transform:scaleX(1.0377);transform-origin:0 0;">April</div>
<div style="position:absolute;left:552px;top:328px;width:84px;height:33px;background:#d9d9d9;"></div>
<div style="position:absolute;left:564px;top:339.59px;font-size:11px;line-height:11px;color:#000;font-weight:bold;white-space:nowrap;transform:scaleX(1.1215);transform-origin:0 0;">May</div>
<div style="position:absolute;left:639px;top:328px;width:84px;height:33px;background:#d9d9d9;"></div>
<div style="position:absolute;left:651px;top:339.59px;font-size:11px;line-height:11px;color:#000;font-weight:bold;white-space:nowrap;transform:scaleX(0.9737);transform-origin:0 0;">June</div>
<div style="position:absolute;left:726px;top:328px;width:84px;height:33px;background:#d9d9d9;"></div>
<div style="position:absolute;left:738px;top:339.59px;font-size:11px;line-height:11px;color:#000;font-weight:bold;white-space:nowrap;transform:scaleX(0.9086);transform-origin:0 0;">July</div>
<div style="position:absolute;left:813px;top:328px;width:84px;height:33px;background:#d9d9d9;"></div>
<div style="position:absolute;left:825px;top:339.59px;font-size:11px;line-height:11px;color:#000;font-weight:bold;white-space:nowrap;transform:scaleX(1.0031);transform-origin:0 0;">August</div>
<div style="position:absolute;left:900px;top:328px;width:84px;height:33px;background:#d9d9d9;"></div>
<div style="position:absolute;left:912px;top:339.59px;font-size:11px;line-height:11px;color:#000;font-weight:bold;white-space:nowrap;transform:scaleX(1.0905);transform-origin:0 0;">September</div>
<div style="position:absolute;left:987px;top:328px;width:84px;height:33px;background:#d9d9d9;"></div>
<div style="position:absolute;left:999px;top:339.59px;font-size:11px;line-height:11px;color:#000;font-weight:bold;white-space:nowrap;transform:scaleX(1.0670);transform-origin:0 0;">October</div>
<div style="position:absolute;left:1074px;top:328px;width:84px;height:33px;background:#d9d9d9;"></div>
<div style="position:absolute;left:1086px;top:339.59px;font-size:11px;line-height:11px;color:#000;font-weight:bold;white-space:nowrap;transform:scaleX(1.0874);transform-origin:0 0;">November</div>
<div style="position:absolute;left:1161px;top:328px;width:84px;height:33px;background:#d9d9d9;"></div>
<div style="position:absolute;left:1173px;top:339.59px;font-size:11px;line-height:11px;color:#000;font-weight:bold;white-space:nowrap;transform:scaleX(1.0715);transform-origin:0 0;">December</div>
<div style="position:absolute;left:1248px;top:328px;width:92px;height:33px;background:#d9d9d9;"></div>
<div style="position:absolute;left:1260px;top:339.59px;font-size:11px;line-height:11px;color:#000;font-weight:bold;white-space:nowrap;transform:scaleX(1.0605);transform-origin:0 0;">Total</div>
<div style="position:absolute;left:0px;top:362px;width:1344px;height:1px;background:#8c8c8c;"></div>
<div style="position:absolute;left:204px;top:363px;width:1137px;height:178px;background:#f2f2f2;"></div>
<div style="position:absolute;left:289px;top:363px;width:1px;height:178px;background:#d9d9d9;"></div>
<div style="position:absolute;left:376px;top:363px;width:1px;height:178px;background:#d9d9d9;"></div>
<div style="position:absolute;left:463px;top:363px;width:1px;height:178px;background:#d9d9d9;"></div>
<div style="position:absolute;left:550px;top:363px;width:1px;height:178px;background:#d9d9d9;"></div>
<div style="position:absolute;left:637px;top:363px;width:1px;height:178px;background:#d9d9d9;"></div>
<div style="position:absolute;left:724px;top:363px;width:1px;height:178px;background:#d9d9d9;"></div>
<div style="position:absolute;left:811px;top:363px;width:1px;height:178px;background:#d9d9d9;"></div>
<div style="position:absolute;left:898px;top:363px;width:1px;height:178px;background:#d9d9d9;"></div>
<div style="position:absolute;left:985px;top:363px;width:1px;height:178px;background:#d9d9d9;"></div>
<div style="position:absolute;left:1072px;top:363px;width:1px;height:178px;background:#d9d9d9;"></div>
<div style="position:absolute;left:1159px;top:363px;width:1px;height:178px;background:#d9d9d9;"></div>
<div style="position:absolute;left:1246px;top:363px;width:1px;height:178px;background:#d9d9d9;"></div>
<div style="position:absolute;left:1341px;top:363px;width:1px;height:178px;background:#d9d9d9;"></div>
<div style="position:absolute;left:52px;top:364px;width:149px;height:32px;background:#d9d9d9;"></div>
<div style="position:absolute;left:64.4px;top:375.69px;font-size:11px;line-height:11px;color:#000;font-weight:bold;white-space:nowrap;transform:scaleX(0.9613);transform-origin:0 0;">Fuel costs</div>
<div style="position:absolute;left:216px;top:375.99px;font-size:11px;line-height:11px;color:#363636;font-weight:normal;white-space:nowrap;">$840,00</div>
<div style="position:absolute;left:303px;top:375.99px;font-size:11px;line-height:11px;color:#363636;font-weight:normal;white-space:nowrap;">$640,00</div>
<div style="position:absolute;left:390px;top:375.99px;font-size:11px;line-height:11px;color:#363636;font-weight:normal;white-space:nowrap;">$0,00</div>
<div style="position:absolute;left:477px;top:375.99px;font-size:11px;line-height:11px;color:#363636;font-weight:normal;white-space:nowrap;">$0,00</div>
<div style="position:absolute;left:564px;top:375.99px;font-size:11px;line-height:11px;color:#363636;font-weight:normal;white-space:nowrap;">$0,00</div>
<div style="position:absolute;left:651px;top:375.99px;font-size:11px;line-height:11px;color:#363636;font-weight:normal;white-space:nowrap;">$0,00</div>
<div style="position:absolute;left:738px;top:375.99px;font-size:11px;line-height:11px;color:#363636;font-weight:normal;white-space:nowrap;">$0,00</div>
<div style="position:absolute;left:825px;top:375.99px;font-size:11px;line-height:11px;color:#363636;font-weight:normal;white-space:nowrap;">$0,00</div>
<div style="position:absolute;left:912px;top:375.99px;font-size:11px;line-height:11px;color:#363636;font-weight:normal;white-space:nowrap;">$0,00</div>
<div style="position:absolute;left:999px;top:375.99px;font-size:11px;line-height:11px;color:#363636;font-weight:normal;white-space:nowrap;">$0,00</div>
<div style="position:absolute;left:1086px;top:375.99px;font-size:11px;line-height:11px;color:#363636;font-weight:normal;white-space:nowrap;">$0,00</div>
<div style="position:absolute;left:1173px;top:375.99px;font-size:11px;line-height:11px;color:#363636;font-weight:normal;white-space:nowrap;">$0,00</div>
<div style="position:absolute;left:1260px;top:375.99px;font-size:11px;line-height:11px;color:#363636;font-weight:normal;white-space:nowrap;">$1.480,00</div>
<div style="position:absolute;left:52px;top:400px;width:149px;height:32px;background:#d9d9d9;"></div>
<div style="position:absolute;left:64.4px;top:411.69px;font-size:11px;line-height:11px;color:#000;font-weight:bold;white-space:nowrap;transform:scaleX(1.0079);transform-origin:0 0;">Spending on tolls</div>
<div style="position:absolute;left:216px;top:411.99px;font-size:11px;line-height:11px;color:#363636;font-weight:normal;white-space:nowrap;">$310,80</div>
<div style="position:absolute;left:303px;top:411.99px;font-size:11px;line-height:11px;color:#363636;font-weight:normal;white-space:nowrap;">$229,50</div>
<div style="position:absolute;left:390px;top:411.99px;font-size:11px;line-height:11px;color:#363636;font-weight:normal;white-space:nowrap;">$0,00</div>
<div style="position:absolute;left:477px;top:411.99px;font-size:11px;line-height:11px;color:#363636;font-weight:normal;white-space:nowrap;">$0,00</div>
<div style="position:absolute;left:564px;top:411.99px;font-size:11px;line-height:11px;color:#363636;font-weight:normal;white-space:nowrap;">$0,00</div>
<div style="position:absolute;left:651px;top:411.99px;font-size:11px;line-height:11px;color:#363636;font-weight:normal;white-space:nowrap;">$0,00</div>
<div style="position:absolute;left:738px;top:411.99px;font-size:11px;line-height:11px;color:#363636;font-weight:normal;white-space:nowrap;">$0,00</div>
<div style="position:absolute;left:825px;top:411.99px;font-size:11px;line-height:11px;color:#363636;font-weight:normal;white-space:nowrap;">$0,00</div>
<div style="position:absolute;left:912px;top:411.99px;font-size:11px;line-height:11px;color:#363636;font-weight:normal;white-space:nowrap;">$0,00</div>
<div style="position:absolute;left:999px;top:411.99px;font-size:11px;line-height:11px;color:#363636;font-weight:normal;white-space:nowrap;">$0,00</div>
<div style="position:absolute;left:1086px;top:411.99px;font-size:11px;line-height:11px;color:#363636;font-weight:normal;white-space:nowrap;">$0,00</div>
<div style="position:absolute;left:1173px;top:411.99px;font-size:11px;line-height:11px;color:#363636;font-weight:normal;white-space:nowrap;">$0,00</div>
<div style="position:absolute;left:1260px;top:411.99px;font-size:11px;line-height:11px;color:#363636;font-weight:normal;white-space:nowrap;">$540,30</div>
<div style="position:absolute;left:52px;top:436px;width:149px;height:32px;background:#d9d9d9;"></div>
<div style="position:absolute;left:64.4px;top:447.69px;font-size:11px;line-height:11px;color:#000;font-weight:bold;white-space:nowrap;transform:scaleX(1.0070);transform-origin:0 0;">Spending on fines</div>
<div style="position:absolute;left:216px;top:447.99px;font-size:11px;line-height:11px;color:#363636;font-weight:normal;white-space:nowrap;">$555,69</div>
<div style="position:absolute;left:303px;top:447.99px;font-size:11px;line-height:11px;color:#363636;font-weight:normal;white-space:nowrap;">$130,23</div>
<div style="position:absolute;left:390px;top:447.99px;font-size:11px;line-height:11px;color:#363636;font-weight:normal;white-space:nowrap;">$0,00</div>
<div style="position:absolute;left:477px;top:447.99px;font-size:11px;line-height:11px;color:#363636;font-weight:normal;white-space:nowrap;">$0,00</div>
<div style="position:absolute;left:564px;top:447.99px;font-size:11px;line-height:11px;color:#363636;font-weight:normal;white-space:nowrap;">$0,00</div>
<div style="position:absolute;left:651px;top:447.99px;font-size:11px;line-height:11px;color:#363636;font-weight:normal;white-space:nowrap;">$0,00</div>
<div style="position:absolute;left:738px;top:447.99px;font-size:11px;line-height:11px;color:#363636;font-weight:normal;white-space:nowrap;">$0,00</div>
<div style="position:absolute;left:825px;top:447.99px;font-size:11px;line-height:11px;color:#363636;font-weight:normal;white-space:nowrap;">$0,00</div>
<div style="position:absolute;left:912px;top:447.99px;font-size:11px;line-height:11px;color:#363636;font-weight:normal;white-space:nowrap;">$0,00</div>
<div style="position:absolute;left:999px;top:447.99px;font-size:11px;line-height:11px;color:#363636;font-weight:normal;white-space:nowrap;">$0,00</div>
<div style="position:absolute;left:1086px;top:447.99px;font-size:11px;line-height:11px;color:#363636;font-weight:normal;white-space:nowrap;">$0,00</div>
<div style="position:absolute;left:1173px;top:447.99px;font-size:11px;line-height:11px;color:#363636;font-weight:normal;white-space:nowrap;">$0,00</div>
<div style="position:absolute;left:1260px;top:447.99px;font-size:11px;line-height:11px;color:#363636;font-weight:normal;white-space:nowrap;">$685,92</div>
<div style="position:absolute;left:52px;top:472px;width:149px;height:32px;background:#d9d9d9;"></div>
<div style="position:absolute;left:64.4px;top:483.69px;font-size:11px;line-height:11px;color:#000;font-weight:bold;white-space:nowrap;transform:scaleX(1.0431);transform-origin:0 0;">Maintenance expenses</div>
<div style="position:absolute;left:216px;top:483.99px;font-size:11px;line-height:11px;color:#363636;font-weight:normal;white-space:nowrap;">$700,00</div>
<div style="position:absolute;left:303px;top:483.99px;font-size:11px;line-height:11px;color:#363636;font-weight:normal;white-space:nowrap;">$2.000,00</div>
<div style="position:absolute;left:390px;top:483.99px;font-size:11px;line-height:11px;color:#363636;font-weight:normal;white-space:nowrap;">$0,00</div>
<div style="position:absolute;left:477px;top:483.99px;font-size:11px;line-height:11px;color:#363636;font-weight:normal;white-space:nowrap;">$2.000,00</div>
<div style="position:absolute;left:564px;top:483.99px;font-size:11px;line-height:11px;color:#363636;font-weight:normal;white-space:nowrap;">$0,00</div>
<div style="position:absolute;left:651px;top:483.99px;font-size:11px;line-height:11px;color:#363636;font-weight:normal;white-space:nowrap;">$0,00</div>
<div style="position:absolute;left:738px;top:483.99px;font-size:11px;line-height:11px;color:#363636;font-weight:normal;white-space:nowrap;">$0,00</div>
<div style="position:absolute;left:825px;top:483.99px;font-size:11px;line-height:11px;color:#363636;font-weight:normal;white-space:nowrap;">$0,00</div>
<div style="position:absolute;left:912px;top:483.99px;font-size:11px;line-height:11px;color:#363636;font-weight:normal;white-space:nowrap;">$0,00</div>
<div style="position:absolute;left:999px;top:483.99px;font-size:11px;line-height:11px;color:#363636;font-weight:normal;white-space:nowrap;">$0,00</div>
<div style="position:absolute;left:1086px;top:483.99px;font-size:11px;line-height:11px;color:#363636;font-weight:normal;white-space:nowrap;">$0,00</div>
<div style="position:absolute;left:1173px;top:483.99px;font-size:11px;line-height:11px;color:#363636;font-weight:normal;white-space:nowrap;">$0,00</div>
<div style="position:absolute;left:1260px;top:483.99px;font-size:11px;line-height:11px;color:#363636;font-weight:normal;white-space:nowrap;">$4.700,00</div>
<div style="position:absolute;left:52px;top:508px;width:149px;height:32px;background:#d9d9d9;"></div>
<div style="position:absolute;left:64.4px;top:519.69px;font-size:11px;line-height:11px;color:#000;font-weight:bold;white-space:nowrap;transform:scaleX(1.0532);transform-origin:0 0;">other expenses</div>
<div style="position:absolute;left:216px;top:519.99px;font-size:11px;line-height:11px;color:#363636;font-weight:normal;white-space:nowrap;">$230,00</div>
<div style="position:absolute;left:303px;top:519.99px;font-size:11px;line-height:11px;color:#363636;font-weight:normal;white-space:nowrap;">$210,00</div>
<div style="position:absolute;left:390px;top:519.99px;font-size:11px;line-height:11px;color:#363636;font-weight:normal;white-space:nowrap;">$0,00</div>
<div style="position:absolute;left:477px;top:519.99px;font-size:11px;line-height:11px;color:#363636;font-weight:normal;white-space:nowrap;">$0,00</div>
<div style="position:absolute;left:564px;top:519.99px;font-size:11px;line-height:11px;color:#363636;font-weight:normal;white-space:nowrap;">$0,00</div>
<div style="position:absolute;left:651px;top:519.99px;font-size:11px;line-height:11px;color:#363636;font-weight:normal;white-space:nowrap;">$0,00</div>
<div style="position:absolute;left:738px;top:519.99px;font-size:11px;line-height:11px;color:#363636;font-weight:normal;white-space:nowrap;">$0,00</div>
<div style="position:absolute;left:825px;top:519.99px;font-size:11px;line-height:11px;color:#363636;font-weight:normal;white-space:nowrap;">$0,00</div>
<div style="position:absolute;left:912px;top:519.99px;font-size:11px;line-height:11px;color:#363636;font-weight:normal;white-space:nowrap;">$0,00</div>
<div style="position:absolute;left:999px;top:519.99px;font-size:11px;line-height:11px;color:#363636;font-weight:normal;white-space:nowrap;">$0,00</div>
<div style="position:absolute;left:1086px;top:519.99px;font-size:11px;line-height:11px;color:#363636;font-weight:normal;white-space:nowrap;">$0,00</div>
<div style="position:absolute;left:1173px;top:519.99px;font-size:11px;line-height:11px;color:#363636;font-weight:normal;white-space:nowrap;">$0,00</div>
<div style="position:absolute;left:1260px;top:519.99px;font-size:11px;line-height:11px;color:#363636;font-weight:normal;white-space:nowrap;">$440,00</div>
<div style="position:absolute;left:204px;top:398px;width:1137px;height:1px;background:#d9d9d9;"></div>
<div style="position:absolute;left:204px;top:434px;width:1137px;height:1px;background:#d9d9d9;"></div>
<div style="position:absolute;left:204px;top:470px;width:1137px;height:1px;background:#d9d9d9;"></div>
<div style="position:absolute;left:204px;top:506px;width:1137px;height:1px;background:#d9d9d9;"></div>
<div style="position:absolute;left:52px;top:544px;width:149px;height:35px;background:#d9d9d9;"></div>
<div style="position:absolute;left:64.4px;top:555.69px;font-size:11px;line-height:11px;color:#000;font-weight:bold;white-space:nowrap;transform:scaleX(1.0785);transform-origin:0 0;">Total expenditure</div>
<div style="position:absolute;left:204px;top:544px;width:84px;height:35px;background:#d9d9d9;"></div>
<div style="position:absolute;left:216px;top:556.59px;font-size:11px;line-height:11px;color:#000;font-weight:bold;white-space:nowrap;">$2.636,49</div>
<div style="position:absolute;left:291px;top:544px;width:84px;height:35px;background:#d9d9d9;"></div>
<div style="position:absolute;left:303px;top:556.59px;font-size:11px;line-height:11px;color:#000;font-weight:bold;white-space:nowrap;">$3.209,73</div>
<div style="position:absolute;left:378px;top:544px;width:84px;height:35px;background:#d9d9d9;"></div>
<div style="position:absolute;left:390px;top:556.59px;font-size:11px;line-height:11px;color:#000;font-weight:bold;white-space:nowrap;">$0,00</div>
<div style="position:absolute;left:465px;top:544px;width:84px;height:35px;background:#d9d9d9;"></div>
<div style="position:absolute;left:477px;top:556.59px;font-size:11px;line-height:11px;color:#000;font-weight:bold;white-space:nowrap;">$2.000,00</div>
<div style="position:absolute;left:552px;top:544px;width:84px;height:35px;background:#d9d9d9;"></div>
<div style="position:absolute;left:564px;top:556.59px;font-size:11px;line-height:11px;color:#000;font-weight:bold;white-space:nowrap;">$0,00</div>
<div style="position:absolute;left:639px;top:544px;width:84px;height:35px;background:#d9d9d9;"></div>
<div style="position:absolute;left:651px;top:556.59px;font-size:11px;line-height:11px;color:#000;font-weight:bold;white-space:nowrap;">$0,00</div>
<div style="position:absolute;left:726px;top:544px;width:84px;height:35px;background:#d9d9d9;"></div>
<div style="position:absolute;left:738px;top:556.59px;font-size:11px;line-height:11px;color:#000;font-weight:bold;white-space:nowrap;">$0,00</div>
<div style="position:absolute;left:813px;top:544px;width:84px;height:35px;background:#d9d9d9;"></div>
<div style="position:absolute;left:825px;top:556.59px;font-size:11px;line-height:11px;color:#000;font-weight:bold;white-space:nowrap;">$0,00</div>
<div style="position:absolute;left:900px;top:544px;width:84px;height:35px;background:#d9d9d9;"></div>
<div style="position:absolute;left:912px;top:556.59px;font-size:11px;line-height:11px;color:#000;font-weight:bold;white-space:nowrap;">$0,00</div>
<div style="position:absolute;left:987px;top:544px;width:84px;height:35px;background:#d9d9d9;"></div>
<div style="position:absolute;left:999px;top:556.59px;font-size:11px;line-height:11px;color:#000;font-weight:bold;white-space:nowrap;">$0,00</div>
<div style="position:absolute;left:1074px;top:544px;width:84px;height:35px;background:#d9d9d9;"></div>
<div style="position:absolute;left:1086px;top:556.59px;font-size:11px;line-height:11px;color:#000;font-weight:bold;white-space:nowrap;">$0,00</div>
<div style="position:absolute;left:1161px;top:544px;width:84px;height:35px;background:#d9d9d9;"></div>
<div style="position:absolute;left:1173px;top:556.59px;font-size:11px;line-height:11px;color:#000;font-weight:bold;white-space:nowrap;">$0,00</div>
<div style="position:absolute;left:1248px;top:544px;width:92px;height:35px;background:#d9d9d9;"></div>
<div style="position:absolute;left:1260px;top:556.59px;font-size:11px;line-height:11px;color:#000;font-weight:bold;white-space:nowrap;">$7.846,22</div>
<div style="position:absolute;left:64.4px;top:597.69px;font-size:11px;line-height:11px;color:#000;font-weight:bold;white-space:nowrap;transform:scaleX(1.0075);transform-origin:0 0;">Spending categories</div>
<div style="position:absolute;left:204px;top:620px;width:1137px;height:1px;background:#d9d9d9;"></div>
<div style="position:absolute;left:204px;top:621px;width:1137px;height:96px;background:#f2f2f2;"></div>
<div style="position:absolute;left:289px;top:621px;width:1px;height:96px;background:#d9d9d9;"></div>
<div style="position:absolute;left:376px;top:621px;width:1px;height:96px;background:#d9d9d9;"></div>
<div style="position:absolute;left:463px;top:621px;width:1px;height:96px;background:#d9d9d9;"></div>
<div style="position:absolute;left:550px;top:621px;width:1px;height:96px;background:#d9d9d9;"></div>
<div style="position:absolute;left:637px;top:621px;width:1px;height:96px;background:#d9d9d9;"></div>
<div style="position:absolute;left:724px;top:621px;width:1px;height:96px;background:#d9d9d9;"></div>
<div style="position:absolute;left:811px;top:621px;width:1px;height:96px;background:#d9d9d9;"></div>
<div style="position:absolute;left:898px;top:621px;width:1px;height:96px;background:#d9d9d9;"></div>
<div style="position:absolute;left:985px;top:621px;width:1px;height:96px;background:#d9d9d9;"></div>
<div style="position:absolute;left:1072px;top:621px;width:1px;height:96px;background:#d9d9d9;"></div>
<div style="position:absolute;left:1159px;top:621px;width:1px;height:96px;background:#d9d9d9;"></div>
<div style="position:absolute;left:1246px;top:621px;width:1px;height:96px;background:#d9d9d9;"></div>
<div style="position:absolute;left:1341px;top:621px;width:1px;height:96px;background:#d9d9d9;"></div>
<div style="position:absolute;left:52px;top:622px;width:149px;height:32px;background:#d9d9d9;"></div>
<div style="position:absolute;left:64.4px;top:633.69px;font-size:11px;line-height:11px;color:#000;font-weight:bold;white-space:nowrap;transform:scaleX(0.9541);transform-origin:0 0;">Car</div>
<div style="position:absolute;left:216px;top:633.99px;font-size:11px;line-height:11px;color:#363636;font-weight:normal;white-space:nowrap;">$1.047,96</div>
<div style="position:absolute;left:303px;top:633.99px;font-size:11px;line-height:11px;color:#363636;font-weight:normal;white-space:nowrap;">$567,73</div>
<div style="position:absolute;left:390px;top:633.99px;font-size:11px;line-height:11px;color:#363636;font-weight:normal;white-space:nowrap;">$0,00</div>
<div style="position:absolute;left:477px;top:633.99px;font-size:11px;line-height:11px;color:#363636;font-weight:normal;white-space:nowrap;">$2.000,00</div>
<div style="position:absolute;left:564px;top:633.99px;font-size:11px;line-height:11px;color:#363636;font-weight:normal;white-space:nowrap;">$0,00</div>
<div style="position:absolute;left:651px;top:633.99px;font-size:11px;line-height:11px;color:#363636;font-weight:normal;white-space:nowrap;">$0,00</div>
<div style="position:absolute;left:738px;top:633.99px;font-size:11px;line-height:11px;color:#363636;font-weight:normal;white-space:nowrap;">$0,00</div>
<div style="position:absolute;left:825px;top:633.99px;font-size:11px;line-height:11px;color:#363636;font-weight:normal;white-space:nowrap;">$0,00</div>
<div style="position:absolute;left:912px;top:633.99px;font-size:11px;line-height:11px;color:#363636;font-weight:normal;white-space:nowrap;">$0,00</div>
<div style="position:absolute;left:999px;top:633.99px;font-size:11px;line-height:11px;color:#363636;font-weight:normal;white-space:nowrap;">$0,00</div>
<div style="position:absolute;left:1086px;top:633.99px;font-size:11px;line-height:11px;color:#363636;font-weight:normal;white-space:nowrap;">$0,00</div>
<div style="position:absolute;left:1173px;top:633.99px;font-size:11px;line-height:11px;color:#363636;font-weight:normal;white-space:nowrap;">$0,00</div>
<div style="position:absolute;left:1260px;top:633.99px;font-size:11px;line-height:11px;color:#363636;font-weight:normal;white-space:nowrap;">$3.615,69</div>
<div style="position:absolute;left:52px;top:658px;width:149px;height:32px;background:#d9d9d9;"></div>
<div style="position:absolute;left:64.4px;top:669.69px;font-size:11px;line-height:11px;color:#000;font-weight:bold;white-space:nowrap;transform:scaleX(0.9881);transform-origin:0 0;">Truck</div>
<div style="position:absolute;left:216px;top:669.99px;font-size:11px;line-height:11px;color:#363636;font-weight:normal;white-space:nowrap;">$1.588,53</div>
<div style="position:absolute;left:303px;top:669.99px;font-size:11px;line-height:11px;color:#363636;font-weight:normal;white-space:nowrap;">$2.642,00</div>
<div style="position:absolute;left:390px;top:669.99px;font-size:11px;line-height:11px;color:#363636;font-weight:normal;white-space:nowrap;">$0,00</div>
<div style="position:absolute;left:477px;top:669.99px;font-size:11px;line-height:11px;color:#363636;font-weight:normal;white-space:nowrap;">$0,00</div>
<div style="position:absolute;left:564px;top:669.99px;font-size:11px;line-height:11px;color:#363636;font-weight:normal;white-space:nowrap;">$0,00</div>
<div style="position:absolute;left:651px;top:669.99px;font-size:11px;line-height:11px;color:#363636;font-weight:normal;white-space:nowrap;">$0,00</div>
<div style="position:absolute;left:738px;top:669.99px;font-size:11px;line-height:11px;color:#363636;font-weight:normal;white-space:nowrap;">$0,00</div>
<div style="position:absolute;left:825px;top:669.99px;font-size:11px;line-height:11px;color:#363636;font-weight:normal;white-space:nowrap;">$0,00</div>
<div style="position:absolute;left:912px;top:669.99px;font-size:11px;line-height:11px;color:#363636;font-weight:normal;white-space:nowrap;">$0,00</div>
<div style="position:absolute;left:999px;top:669.99px;font-size:11px;line-height:11px;color:#363636;font-weight:normal;white-space:nowrap;">$0,00</div>
<div style="position:absolute;left:1086px;top:669.99px;font-size:11px;line-height:11px;color:#363636;font-weight:normal;white-space:nowrap;">$0,00</div>
<div style="position:absolute;left:1173px;top:669.99px;font-size:11px;line-height:11px;color:#363636;font-weight:normal;white-space:nowrap;">$0,00</div>
<div style="position:absolute;left:1260px;top:669.99px;font-size:11px;line-height:11px;color:#363636;font-weight:normal;white-space:nowrap;">$4.230,53</div>
<div style="position:absolute;left:52px;top:694px;width:149px;height:32px;background:#d9d9d9;"></div>
<div style="position:absolute;left:64.4px;top:705.69px;font-size:11px;line-height:11px;color:#000;font-weight:bold;white-space:nowrap;transform:scaleX(1.0504);transform-origin:0 0;">Motorcycle</div>
<div style="position:absolute;left:216px;top:705.99px;font-size:11px;line-height:11px;color:#363636;font-weight:normal;white-space:nowrap;">$0,00</div>
<div style="position:absolute;left:303px;top:705.99px;font-size:11px;line-height:11px;color:#363636;font-weight:normal;white-space:nowrap;">$0,00</div>
<div style="position:absolute;left:390px;top:705.99px;font-size:11px;line-height:11px;color:#363636;font-weight:normal;white-space:nowrap;">$0,00</div>
<div style="position:absolute;left:477px;top:705.99px;font-size:11px;line-height:11px;color:#363636;font-weight:normal;white-space:nowrap;">$0,00</div>
<div style="position:absolute;left:564px;top:705.99px;font-size:11px;line-height:11px;color:#363636;font-weight:normal;white-space:nowrap;">$0,00</div>
<div style="position:absolute;left:651px;top:705.99px;font-size:11px;line-height:11px;color:#363636;font-weight:normal;white-space:nowrap;">$0,00</div>
<div style="position:absolute;left:738px;top:705.99px;font-size:11px;line-height:11px;color:#363636;font-weight:normal;white-space:nowrap;">$0,00</div>
<div style="position:absolute;left:825px;top:705.99px;font-size:11px;line-height:11px;color:#363636;font-weight:normal;white-space:nowrap;">$0,00</div>
<div style="position:absolute;left:912px;top:705.99px;font-size:11px;line-height:11px;color:#363636;font-weight:normal;white-space:nowrap;">$0,00</div>
<div style="position:absolute;left:999px;top:705.99px;font-size:11px;line-height:11px;color:#363636;font-weight:normal;white-space:nowrap;">$0,00</div>
<div style="position:absolute;left:1086px;top:705.99px;font-size:11px;line-height:11px;color:#363636;font-weight:normal;white-space:nowrap;">$0,00</div>
<div style="position:absolute;left:1173px;top:705.99px;font-size:11px;line-height:11px;color:#363636;font-weight:normal;white-space:nowrap;">$0,00</div>
<div style="position:absolute;left:1260px;top:705.99px;font-size:11px;line-height:11px;color:#363636;font-weight:normal;white-space:nowrap;">$0,00</div>
<div style="position:absolute;left:204px;top:656px;width:1137px;height:1px;background:#d9d9d9;"></div>
<div style="position:absolute;left:204px;top:692px;width:1137px;height:1px;background:#d9d9d9;"></div>
<div style="position:absolute;left:24px;top:224px;width:18px;height:50px;border:2px solid #217346;"></div>
<div style="position:absolute;left:26px;top:226px;width:14px;height:46px;border:1px solid #fff;"></div>
<div style="position:absolute;left:37px;top:269px;width:6px;height:6px;background:#217346;border:1px solid #fff;"></div>
<div style="position:absolute;left:1344px;top:207px;width:22px;height:511px;background:#e6e6e6;"></div>
<div style="position:absolute;left:1348px;top:241px;width:12px;height:460px;background:#d9d9d9;"></div>
<div style="position:absolute;left:1344px;top:225px;width:1px;height:492px;background:#9a9a9a;"></div>
<div style="position:absolute;left:1348px;top:209px;width:15px;height:15px;background:#fff;border:1px solid #ababab;"></div>
<svg style="left:1351px;top:214px" width="9" height="5"><path d="M0 5H9L4.5 0Z" fill="#777"/></svg>
<div style="position:absolute;left:1348px;top:223px;width:15px;height:18px;background:#fff;border:1px solid #ababab;border-top:2px solid #9a9a9a;"></div>
<div style="position:absolute;left:1348px;top:701px;width:15px;height:15px;background:#fff;border:1px solid #ababab;"></div>
<svg style="left:1351px;top:706px" width="9" height="5"><path d="M0 0H9L4.5 5Z" fill="#777"/></svg>
<div style="position:absolute;left:0px;top:717px;width:1366px;height:1px;background:#c6c6c6;"></div>
<div style="position:absolute;left:0px;top:718px;width:1366px;height:27px;background:#e6e6e6;"></div>
<div style="position:absolute;left:0px;top:744px;width:1366px;height:1px;background:#d0d0d0;"></div>
<svg style="left:27px;top:727px" width="5" height="9"><path d="M5 0V9L0 4.5Z" fill="#217346"/></svg>
<svg style="left:56px;top:727px" width="5" height="9"><path d="M0 0V9L5 4.5Z" fill="#217346"/></svg>
<div style="position:absolute;left:80.5px;top:723.15px;font-size:14px;line-height:14px;color:#217346;font-weight:bold;white-space:nowrap;">...</div>
<div style="position:absolute;left:148px;top:720px;width:1px;height:24px;background:#b4b4b4;"></div>
<div style="position:absolute;left:112.73751953125px;top:724.07px;font-size:13.5px;line-height:13.5px;color:#444;font-weight:normal;white-space:nowrap;">ago</div>
<div style="position:absolute;left:190px;top:720px;width:1px;height:24px;background:#b4b4b4;"></div>
<div style="position:absolute;left:159.99560546875px;top:724.07px;font-size:13.5px;line-height:13.5px;color:#444;font-weight:normal;white-space:nowrap;">set</div>
<div style="position:absolute;left:234px;top:720px;width:1px;height:24px;background:#b4b4b4;"></div>
<div style="position:absolute;left:202.6164453125px;top:724.07px;font-size:13.5px;line-height:13.5px;color:#444;font-weight:normal;white-space:nowrap;">out</div>
<div style="position:absolute;left:281px;top:720px;width:1px;height:24px;background:#b4b4b4;"></div>
<div style="position:absolute;left:246.6166796875px;top:724.07px;font-size:13.5px;line-height:13.5px;color:#444;font-weight:normal;white-space:nowrap;">nov</div>
<div style="position:absolute;left:327px;top:720px;width:1px;height:24px;background:#b4b4b4;"></div>
<div style="position:absolute;left:293.1166796875px;top:724.07px;font-size:13.5px;line-height:13.5px;color:#444;font-weight:normal;white-space:nowrap;">dez</div>
<div style="position:absolute;left:372px;top:720px;width:1px;height:24px;background:#b4b4b4;"></div>
<div style="position:absolute;left:338.6166796875px;top:724.07px;font-size:13.5px;line-height:13.5px;color:#444;font-weight:normal;white-space:nowrap;">con</div>
<div style="position:absolute;left:423px;top:720px;width:1px;height:24px;background:#b4b4b4;"></div>
<div style="position:absolute;left:384.36861328125px;top:724.07px;font-size:13.5px;line-height:13.5px;color:#444;font-weight:normal;white-space:nowrap;">man</div>
<div style="position:absolute;left:534px;top:720px;width:1px;height:24px;background:#b4b4b4;"></div>
<div style="position:absolute;left:486.99384765625px;top:724.07px;font-size:13.5px;line-height:13.5px;color:#444;font-weight:normal;white-space:nowrap;">Rman</div>
<div style="position:absolute;left:586px;top:720px;width:1px;height:24px;background:#b4b4b4;"></div>
<div style="position:absolute;left:546.1171484375px;top:724.07px;font-size:13.5px;line-height:13.5px;color:#444;font-weight:normal;white-space:nowrap;">Rlog</div>
<div style="position:absolute;left:639px;top:720px;width:1px;height:24px;background:#b4b4b4;"></div>
<div style="position:absolute;left:598.6171484375px;top:724.07px;font-size:13.5px;line-height:13.5px;color:#444;font-weight:normal;white-space:nowrap;">Rind</div>
<div style="position:absolute;left:693px;top:720px;width:1px;height:24px;background:#b4b4b4;"></div>
<div style="position:absolute;left:650.2482421875px;top:724.07px;font-size:13.5px;line-height:13.5px;color:#444;font-weight:normal;white-space:nowrap;">Rimp</div>
<div style="position:absolute;left:759px;top:720px;width:1px;height:24px;background:#b4b4b4;"></div>
<div style="position:absolute;left:706.114921875px;top:724.07px;font-size:13.5px;line-height:13.5px;color:#444;font-weight:normal;white-space:nowrap;">Dgeral</div>
<div style="position:absolute;left:830px;top:720px;width:1px;height:24px;background:#b4b4b4;"></div>
<div style="position:absolute;left:771.61908203125px;top:724.07px;font-size:13.5px;line-height:13.5px;color:#444;font-weight:normal;white-space:nowrap;">DComp</div>
<div style="position:absolute;left:891px;top:720px;width:1px;height:24px;background:#b4b4b4;"></div>
<div style="position:absolute;left:842.49384765625px;top:724.07px;font-size:13.5px;line-height:13.5px;color:#444;font-weight:normal;white-space:nowrap;">Dman</div>
<div style="position:absolute;left:945px;top:720px;width:1px;height:24px;background:#b4b4b4;"></div>
<div style="position:absolute;left:904.1171484375px;top:724.07px;font-size:13.5px;line-height:13.5px;color:#444;font-weight:normal;white-space:nowrap;">Dlog</div>
<div style="position:absolute;left:999px;top:720px;width:1px;height:24px;background:#b4b4b4;"></div>
<div style="position:absolute;left:958.1171484375px;top:724.07px;font-size:13.5px;line-height:13.5px;color:#444;font-weight:normal;white-space:nowrap;">Dind</div>
<div style="position:absolute;left:1040px;top:720px;width:1px;height:24px;background:#b4b4b4;"></div>
<div style="position:absolute;left:1010.874765625px;top:724.07px;font-size:13.5px;line-height:13.5px;color:#444;font-weight:normal;white-space:nowrap;">INI</div>
<div style="position:absolute;left:100px;top:720px;width:1px;height:24px;background:#b4b4b4;"></div>
<div style="position:absolute;left:423px;top:718px;width:53px;height:24px;background:#fff;"></div>
<div style="position:absolute;left:423px;top:740px;width:53px;height:2px;background:#217346;"></div>
<div style="position:absolute;left:435px;top:724.07px;font-size:13.5px;line-height:13.5px;color:#217346;font-weight:bold;white-space:nowrap;transform:scaleX(0.9103);transform-origin:0 0;">Rger</div>
<div style="position:absolute;left:1053px;top:724.07px;font-size:13.5px;line-height:13.5px;color:#444;font-weight:normal;white-space:nowrap;clip-path:inset(0 4px 0 0);">D</div>
<div style="position:absolute;left:1066px;top:723.99px;font-size:13px;line-height:13px;color:#217346;font-weight:bold;white-space:nowrap;">...</div>
<svg style="left:1091px;top:723px" width="17" height="17" viewBox="0 0 17 17"><circle cx="8.5" cy="8.5" r="7.8" fill="none" stroke="#555" stroke-width="1.2"/><path d="M8.5 4.5V12.5M4.5 8.5H12.5" stroke="#555" stroke-width="1.4"/></svg>
<div style="position:absolute;left:1127px;top:726px;width:2px;height:2px;background:#aaa;"></div>
<div style="position:absolute;left:1127px;top:730px;width:2px;height:2px;background:#aaa;"></div>
<div style="position:absolute;left:1127px;top:734px;width:2px;height:2px;background:#aaa;"></div>
<div style="position:absolute;left:1145px;top:725px;width:199px;height:14px;background:#dcdcdc;"></div>
<div style="position:absolute;left:1145px;top:724px;width:15px;height:15px;background:#fff;border:1px solid #a8a8a8;"></div>
<svg style="left:1150px;top:728px" width="5" height="8"><path d="M5 0V8L0 4Z" fill="#555"/></svg>
<div style="position:absolute;left:1159px;top:724px;width:109px;height:15px;background:#fff;border:1px solid #a8a8a8;"></div>
<div style="position:absolute;left:1329px;top:724px;width:15px;height:15px;background:#fff;border:1px solid #a8a8a8;"></div>
<svg style="left:1335px;top:728px" width="5" height="8"><path d="M0 0V8L5 4Z" fill="#555"/></svg>
<div style="position:absolute;left:0px;top:745px;width:1366px;height:23px;background:#f3f2f1;"></div>
<div style="position:absolute;left:7px;top:750.26px;font-size:11.5px;line-height:11.5px;color:#444;font-weight:normal;white-space:nowrap;">Pronto</div>
<svg style="left:62px;top:749px" width="14" height="14" viewBox="0 0 14 14"><circle cx="3.5" cy="3" r="2.5" fill="#666"/><path d="M6 2.5H13.5V13.5H1.5V7 M1.5 7H13.5 M1.5 10H13.5 M5 7V13.5 M9 7V13.5" fill="none" stroke="#666" stroke-width="1"/></svg>
<div style="position:absolute;left:1086px;top:745px;width:38px;height:21px;background:#d2d2d2;"></div>
<svg style="left:1098px;top:748px" width="14" height="14" viewBox="0 0 14 14"><path d="M0.5 0.5H13.5V13.5H0.5Z M0.5 4.8H13.5 M0.5 9.2H13.5 M4.8 0.5V13.5 M9.2 0.5V13.5" fill="none" stroke="#555" stroke-width="1"/></svg>
<svg style="left:1136px;top:748px" width="14" height="14" viewBox="0 0 14 14"><path d="M0.5 0.5H13.5V13.5H0.5Z M3 3H11V11H3Z M5 5.5H9 M5 7.5H9 M5 9.5H9" fill="none" stroke="#555" stroke-width="1"/></svg>
<svg style="left:1174px;top:748px" width="14" height="15" viewBox="0 0 14 15"><path d="M0.5 0.5H13.5V13.5H0.5Z M4.5 0.5V7.5H8.5V0.5 M0.5 14.5H13.5" fill="none" stroke="#555" stroke-width="1"/></svg>
<div style="position:absolute;left:1205px;top:755px;width:6px;height:2px;background:#444;"></div>
<div style="position:absolute;left:1216px;top:756px;width:99px;height:1px;background:#9a9a9a;"></div>
<div style="position:absolute;left:1263px;top:753px;width:1px;height:6px;background:#9a9a9a;"></div>
<div style="position:absolute;left:1258px;top:751px;width:5px;height:9px;background:#555;"></div>
<div style="position:absolute;left:1318px;top:755px;width:8px;height:2px;background:#444;"></div>
<div style="position:absolute;left:1321px;top:752px;width:2px;height:8px;background:#444;"></div>
<div style="position:absolute;left:1337px;top:750.26px;font-size:11.5px;line-height:11.5px;color:#444;font-weight:normal;white-space:nowrap;transform:scaleX(0.9124);transform-origin:0 0;">90%</div>
<div style="position:absolute;left:0px;top:766px;width:1366px;height:2px;background:#2b2b2b;"></div>
<div style="position:absolute;left:48px;top:766px;width:343px;height:2px;background:#dcdcdc;"></div>
</body></html>
